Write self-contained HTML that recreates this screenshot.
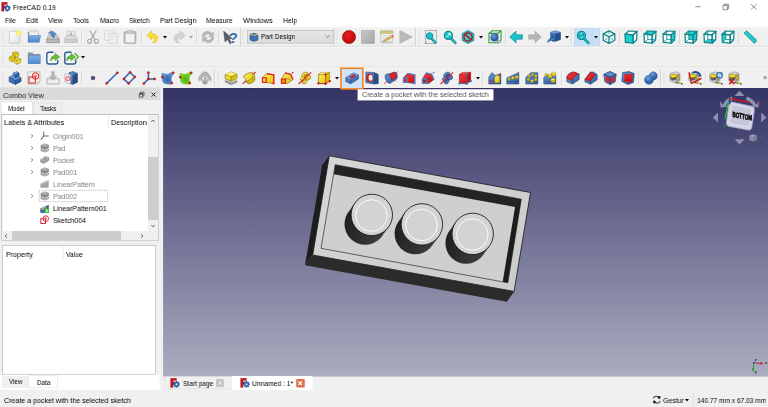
<!DOCTYPE html>
<html lang="en">
<head>
<meta charset="utf-8">
<title>FreeCAD 0.19</title>
<style>
html,body{margin:0;padding:0;}
body{width:768px;height:407px;overflow:hidden;background:#f0f0f0;position:relative;font-family:"Liberation Sans",sans-serif;}
div{position:absolute;box-sizing:border-box;}
.t{position:absolute;white-space:nowrap;display:block;transform-origin:0 50%;will-change:transform;}
.i{position:absolute;overflow:visible;display:block;}
</style>
</head>
<body>
<svg class="i" style="left:0;top:0" width="768" height="407" viewBox="0 0 768 407"><defs>
<linearGradient id="vpg" x1="0" y1="0" x2="0" y2="1"><stop offset="0" stop-color="#333366"/><stop offset="1" stop-color="#acacc0"/></linearGradient>
<linearGradient id="ttl" x1="0" y1="0" x2="0" y2="1"><stop offset="0" stop-color="#dcdcdc"/><stop offset="1" stop-color="#d9d9d9"/></linearGradient>
<linearGradient id="cmb" x1="0" y1="0" x2="0" y2="1"><stop offset="0" stop-color="#e8e8e8"/><stop offset="1" stop-color="#dadada"/></linearGradient>
<linearGradient id="mnu" x1="0" y1="0" x2="0" y2="1"><stop offset="0" stop-color="#ffffff"/><stop offset="1" stop-color="#f0f0f0"/></linearGradient>
</defs><rect x="0" y="0" width="768" height="26" fill="#ffffff" /><rect x="0" y="25.9" width="768" height="2.4" fill="url(#mnu)" /><path d="M0,46.4 H768" stroke="#dddddd" stroke-width="0.9"/><path d="M0,47.4 H768" stroke="#f8f8f8" stroke-width="0.8"/><path d="M0,67 H768" stroke="#dfdfdf" stroke-width="0.9"/><path d="M0,68 H768" stroke="#f8f8f8" stroke-width="0.8"/><rect x="163.1" y="88" width="604.9" height="288.6" fill="url(#vpg)" /><rect x="0" y="87.4" width="160.5" height="12.6" fill="url(#ttl)" /><rect x="1.3" y="101.9" width="31.4" height="12.4" fill="#ffffff" stroke="#dcdcdc" stroke-width="0.6" /><rect x="33.3" y="103.1" width="27.8" height="11.2" fill="#f0f0f0" stroke="#d6d6d6" stroke-width="0.6" /><rect x="1.8" y="114.6" width="156.5" height="125.8" fill="#ffffff" stroke="#b2b2b6" stroke-width="0.8" /><path d="M108.6,115.4 V128.6" stroke="#e3e3e3" stroke-width="0.7"/><rect x="148" y="115" width="10.3" height="116" fill="#f0f0f0" /><rect x="148" y="157" width="10.3" height="62.8" fill="#cdcdcd" /><rect x="2.2" y="231" width="156" height="9.4" fill="#f0f0f0" /><rect x="12" y="231" width="109" height="9.4" fill="#cdcdcd" /><rect x="39.2" y="190.3" width="68.4" height="11.4" fill="none" stroke="#6e6e6e" stroke-width="0.5" stroke-dasharray="0.9 0.9"/><rect x="2.4" y="245.4" width="153" height="128.9" fill="#ffffff" stroke="#bebec4" stroke-width="0.8" /><path d="M63.2,246.4 V259.6" stroke="#e3e3e3" stroke-width="0.7"/><rect x="0" y="374.8" width="159.6" height="14.9" fill="#ffffff" /><rect x="2.45" y="376.65" width="25.5" height="10.7" fill="#f0f0f0" stroke="#e6e6e6" stroke-width="0.5" /><rect x="28.25" y="375.65" width="29.1" height="12.3" fill="#ffffff" stroke="#dedede" stroke-width="0.5" /><rect x="164.9" y="376.7" width="66.4" height="12.2" fill="#f0f0f0" stroke="#dadada" stroke-width="0.6" /><rect x="231.5" y="376" width="81" height="14" fill="#ffffff" /><rect x="216" y="379" width="7.8" height="8" fill="#c4c4c4" rx="1" /><rect x="296.2" y="379" width="8.6" height="8.4" fill="#e0714c" rx="1.2" /><path d="M693.4,392 V407" stroke="#dadada" stroke-width="0.7"/><rect x="247.55" y="30.45" width="85.5" height="12.8" fill="url(#cmb)" stroke="#bcbcbc" stroke-width="0.7" /><rect x="574.25" y="28.25" width="25.5" height="17.2" fill="#c7e0f6" stroke="#b4d5f2" stroke-width="0.5" /><path d="M592.3,28 V45.7" stroke="#aed2f0" stroke-width="0.6"/><rect x="341" y="68.3" width="21.8" height="20.6" fill="#d1e4f6" stroke="#f5831f" stroke-width="1.6" /><rect x="358.2" y="89.9" width="135.8" height="11.2" fill="#1a1a40" opacity="0.25"/><rect x="357.75" y="89.25" width="135.6" height="11.1" fill="#ffffff" stroke="#d0d0da" stroke-width="0.3" /></svg>
<svg class="i" style="left:0px;top:0px;" width="768" height="407" viewBox="0 0 768 407">
<defs>
<linearGradient id="cyl" x1="0" y1="0" x2="1" y2="0.3"><stop offset="0" stop-color="#1c1c1c"/><stop offset="1" stop-color="#3c3c3c"/></linearGradient>
<linearGradient id="topf" x1="0" y1="0" x2="1" y2="1"><stop offset="0" stop-color="#d6d6d6"/><stop offset="1" stop-color="#cbcbcb"/></linearGradient>
</defs>
<polygon points="329.3,155.8 322.1,165.2 305,265.2 312.7,255" fill="#1d1d1d"/>
<polygon points="312.7,255 514.1,291.4 507,301.8 305,265.2" fill="#2b2b2b"/>
<polygon points="329.3,155.8 530.5,192.5 514.1,291.4 312.7,255" fill="url(#topf)" stroke="#151515" stroke-width="0.8"/>
<polygon points="335.2,164.7 521.3,199.2 507.8,282.8 321,248.3" fill="#cfcfcf" stroke="#111" stroke-width="0.6"/>
<polygon points="521.3,199.2 507.8,282.8 502.7,281.8 515.4,205" fill="#1c1c1c"/>
<polygon points="335.2,164.7 521.3,199.2 516.2,207.2 333.8,174.2" fill="#242424"/>
<path d="M354.98,202.83 L348.38,212.03 A20.7,20.7 0 0 1 382.02,236.17 L388.62,226.97 Z" fill="url(#cyl)"/><circle cx="365.2" cy="224.1" r="20.7" fill="url(#cyl)"/><circle cx="371.8" cy="214.9" r="20.7" fill="#d3d3d3" stroke="#141414" stroke-width="0.85"/><circle cx="371.40000000000003" cy="215.5" r="15.8" fill="none" stroke="#ffffff" stroke-width="0.9"/><path d="M405.08,212.33 L398.48,221.53 A20.7,20.7 0 0 1 432.12,245.67 L438.72,236.47 Z" fill="url(#cyl)"/><circle cx="415.29999999999995" cy="233.6" r="20.7" fill="url(#cyl)"/><circle cx="421.9" cy="224.4" r="20.7" fill="#d3d3d3" stroke="#141414" stroke-width="0.85"/><circle cx="421.5" cy="225.0" r="15.8" fill="none" stroke="#ffffff" stroke-width="0.9"/><path d="M455.88,221.83 L449.28,231.03 A20.7,20.7 0 0 1 482.92,255.17 L489.52,245.97 Z" fill="url(#cyl)"/><circle cx="466.09999999999997" cy="243.1" r="20.7" fill="url(#cyl)"/><circle cx="472.7" cy="233.9" r="20.7" fill="#d3d3d3" stroke="#141414" stroke-width="0.85"/><circle cx="472.3" cy="234.5" r="15.8" fill="none" stroke="#ffffff" stroke-width="0.9"/></svg>
<svg class="i" style="left:1.5px;top:29.5px" width="2" height="14.5" viewBox="0 0 2 14.5"><path d="M1,0.6 V14.5" stroke="#c9c9c9" stroke-width="0.9" stroke-dasharray="0.9 1.15" fill="none"/></svg>
<svg class="i" style="left:1.5px;top:50.5px" width="2" height="14" viewBox="0 0 2 14"><path d="M1,0.6 V14" stroke="#c9c9c9" stroke-width="0.9" stroke-dasharray="0.9 1.15" fill="none"/></svg>
<svg class="i" style="left:1.5px;top:71px" width="2" height="15" viewBox="0 0 2 15"><path d="M1,0.6 V15" stroke="#c9c9c9" stroke-width="0.9" stroke-dasharray="0.9 1.15" fill="none"/></svg>
<svg class="i" style="left:8.2px;top:30px;" width="14" height="14" viewBox="0 0 14 14"><defs><linearGradient id="gdoc" x1="0" y1="0" x2="1" y2="1"><stop offset="0" stop-color="#ffffff"/><stop offset="1" stop-color="#e1e1e1"/></linearGradient>
<radialGradient id="gsun"><stop offset="0" stop-color="#fffbd0"/><stop offset="0.6" stop-color="#fcea4f"/><stop offset="1" stop-color="#fcea4f" stop-opacity="0.75"/></radialGradient></defs>
<rect x="1.4" y="1.2" width="10.6" height="12" rx="0.5" fill="url(#gdoc)" stroke="#b4b4b4" stroke-width="0.6"/>
<circle cx="10.6" cy="3.1" r="2.7" fill="url(#gsun)"/></svg>
<svg class="i" style="left:27px;top:30px;" width="14" height="14" viewBox="0 0 14 14"><defs><linearGradient id="gfold" x1="0" y1="0" x2="0" y2="1"><stop offset="0" stop-color="#7fb0e8"/><stop offset="1" stop-color="#4a86cf"/></linearGradient></defs>
<path d="M0.8,2 h4.2 l0.8,1 h6 v8.6 h-11 z" fill="#8f9499"/>
<rect x="2" y="0.9" width="9.2" height="6" fill="#e9e9e9" stroke="#a5a5a5" stroke-width="0.4"/>
<rect x="2.7" y="2" width="8.6" height="5" fill="#f4f4f4" stroke="#b5b5b5" stroke-width="0.4"/>
<path d="M1,12.2 L2.6,5.6 H13.6 L12.2,12.2 Z" fill="url(#gfold)" stroke="#3b6fb4" stroke-width="0.5"/></svg>
<svg class="i" style="left:45.5px;top:30px;" width="14" height="14" viewBox="0 0 14 14"><defs><linearGradient id="gdrv" x1="0" y1="0" x2="0" y2="1"><stop offset="0" stop-color="#d9d9d9"/><stop offset="1" stop-color="#a2a2a2"/></linearGradient></defs>
<path d="M0.6,9 L3,4.6 H11 L13.4,9 V12.8 H0.6 Z" fill="url(#gdrv)" stroke="#8a8a8a" stroke-width="0.5"/>
<rect x="0.9" y="9.2" width="12.2" height="3.4" fill="#b9b9b9" stroke="#909090" stroke-width="0.4"/>
<path d="M2.6,3.6 C3.2,0.6 7.4,0.2 8.4,3.2 L9.8,3 L7.6,8 L4.4,4.2 L5.9,3.9 C5.4,2.6 4,2.6 2.6,3.6 Z" fill="#4d86cd" stroke="#2e5f9f" stroke-width="0.5"/></svg>
<svg class="i" style="left:63.8px;top:30px;" width="14" height="14" viewBox="0 0 14 14"><path d="M3,1.4 H11 V6 H3 Z" fill="#ececec" stroke="#b5b5b5" stroke-width="0.5"/>
<path d="M7,2.2 v2.6 M5.8,3.8 L7,5.2 L8.2,3.8" stroke="#9a9a9a" stroke-width="0.9" fill="none"/>
<path d="M0.8,8.8 L2.6,5.4 H11.4 L13.2,8.8 V12.4 H0.8 Z" fill="#dedede" stroke="#aaaaaa" stroke-width="0.5"/>
<rect x="1" y="9" width="12" height="3.2" fill="#cfcfcf" stroke="#b0b0b0" stroke-width="0.4"/></svg>
<svg class="i" style="left:79.8px;top:30px" width="3" height="14" viewBox="0 0 3 14"><path d="M1.5,0 V14" stroke="#dadada" stroke-width="1" fill="none"/><path d="M2.4,0 V14" stroke="#f8f8f8" stroke-width="0.7" fill="none"/></svg>
<svg class="i" style="left:86.3px;top:30px;" width="14" height="14" viewBox="0 0 14 14"><g fill="none" stroke="#a6a6a6" stroke-width="1.1" stroke-linecap="round">
<path d="M4,0.8 L8.8,9.6"/><path d="M10,0.8 L5.2,9.6"/>
<circle cx="3.6" cy="11.2" r="2"/><circle cx="10.4" cy="11.2" r="2"/></g></svg>
<svg class="i" style="left:104.3px;top:30px;" width="14" height="14" viewBox="0 0 14 14"><rect x="0.8" y="0.8" width="8.4" height="9.6" rx="0.6" fill="#f4f4f4" stroke="#c6c6c6" stroke-width="0.6"/>
<rect x="4.6" y="3.4" width="8.6" height="10" rx="0.6" fill="#f1f1f1" stroke="#c2c2c2" stroke-width="0.6"/>
<path d="M6,6 h5.6 M6,7.8 h5.6 M6,9.6 h4" stroke="#d8d8d8" stroke-width="0.6"/></svg>
<svg class="i" style="left:122.5px;top:30px;" width="14" height="14" viewBox="0 0 14 14"><rect x="1" y="1.6" width="12" height="11.8" rx="1" fill="#b9b9b9" stroke="#a1a1a1" stroke-width="0.6"/>
<rect x="2.6" y="3.4" width="8.8" height="9" fill="#f3f3f3" stroke="#cfcfcf" stroke-width="0.4"/>
<rect x="4.2" y="0.6" width="5.6" height="2.6" rx="0.8" fill="#cfcfcf" stroke="#a1a1a1" stroke-width="0.5"/></svg>
<svg class="i" style="left:139.8px;top:30px" width="3" height="14" viewBox="0 0 3 14"><path d="M1.5,0 V14" stroke="#dadada" stroke-width="1" fill="none"/><path d="M2.4,0 V14" stroke="#f8f8f8" stroke-width="0.7" fill="none"/></svg>
<svg class="i" style="left:145.5px;top:30px;" width="14" height="14" viewBox="0 0 14 14"><path d="M0.8,5.4 L5.6,0.8 V3.6 C10.4,3.6 12.8,6.6 11.6,10 C10.8,12.2 8.6,13 6.6,12.6 C8.6,11.6 9,9.6 8,8.4 C7.4,7.6 6.4,7.4 5.6,7.4 V10 Z" fill="#f8dc3c" stroke="#d9b318" stroke-width="0.5"/></svg>
<svg class="i" style="left:163px;top:35.6px" width="4" height="2.4" viewBox="0 0 4 2.4"><polygon points="0,0 4,0 2,2.4" fill="#000"/></svg>
<svg class="i" style="left:172px;top:30px;" width="14" height="14" viewBox="0 0 14 14"><path d="M13.2,5.4 L8.4,0.8 V3.6 C3.6,3.6 1.2,6.6 2.4,10 C3.2,12.2 5.4,13 7.4,12.6 C5.4,11.6 5,9.6 6,8.4 C6.6,7.6 7.6,7.4 8.4,7.4 V10 Z" fill="#d3d3d3" stroke="#bdbdbd" stroke-width="0.5"/></svg>
<svg class="i" style="left:189.3px;top:35.6px" width="4" height="2.4" viewBox="0 0 4 2.4"><polygon points="0,0 4,0 2,2.4" fill="#9d9d9d"/></svg>
<svg class="i" style="left:194.8px;top:30px" width="3" height="14" viewBox="0 0 3 14"><path d="M1.5,0 V14" stroke="#dadada" stroke-width="1" fill="none"/><path d="M2.4,0 V14" stroke="#f8f8f8" stroke-width="0.7" fill="none"/></svg>
<svg class="i" style="left:201px;top:30px;" width="14" height="14" viewBox="0 0 14 14"><g fill="#b7b7b7" stroke="#a3a3a3" stroke-width="0.3">
<path d="M1,6.6 C1.2,3 4.2,1 7.4,1.4 C9,1.6 10.2,2.4 11,3.4 L12.6,1.8 V6.8 H7.6 L9.2,5.2 C8.4,4.2 7.4,3.8 6.4,3.9 C4.8,4.1 3.9,5.2 3.6,6.6 Z"/>
<path d="M13,7.4 C12.8,11 9.8,13 6.6,12.6 C5,12.4 3.8,11.6 3,10.6 L1.4,12.2 V7.2 H6.4 L4.8,8.8 C5.6,9.8 6.6,10.2 7.6,10.1 C9.2,9.9 10.1,8.8 10.4,7.4 Z"/></g></svg>
<svg class="i" style="left:216.8px;top:30px" width="3" height="14" viewBox="0 0 3 14"><path d="M1.5,0 V14" stroke="#dadada" stroke-width="1" fill="none"/><path d="M2.4,0 V14" stroke="#f8f8f8" stroke-width="0.7" fill="none"/></svg>
<svg class="i" style="left:223px;top:30px;" width="14" height="14" viewBox="0 0 14 14"><text x="10.4" y="12.8" font-family="Liberation Sans,sans-serif" font-weight="bold" font-size="15" text-anchor="middle" fill="#3b70b6">?</text>
<path d="M0.6,1 L9.4,8.6 L6.2,8.8 L8.6,13 L6.8,13.8 L4.6,9.6 L2,12 Z" fill="#595d61" stroke="#3c3f42" stroke-width="0.4"/></svg>
<svg class="i" style="left:238.5px;top:28px" width="3" height="18" viewBox="0 0 3 18"><path d="M1.5,0 V18" stroke="#d2d2d2" stroke-width="1.2" fill="none"/><path d="M2.4,0 V18" stroke="#f8f8f8" stroke-width="0.7" fill="none"/></svg>
<svg class="i" style="left:242.2px;top:29.5px" width="2" height="14.5" viewBox="0 0 2 14.5"><path d="M1,0.6 V14.5" stroke="#c9c9c9" stroke-width="0.9" stroke-dasharray="0.9 1.15" fill="none"/></svg>
<svg class="i" style="left:249.2px;top:31.9px;" width="10" height="10" viewBox="0 0 10 10"><path d="M1,2.2 L5,1.2 L9,2.4 L9,8 L5,9.4 L1,8 Z" fill="#3f6fb6" stroke="#20407a" stroke-width="0.5"/><path d="M1,2.2 L5,3.4 L9,2.4" fill="none" stroke="#e8c93a" stroke-width="0.9"/></svg>
<svg class="i" style="left:325.3px;top:35px" width="5" height="3.2" viewBox="0 0 5 3.2"><path d="M0.4,0.4 L2.5,2.6 L4.6,0.4" fill="none" stroke="#555" stroke-width="0.7"/></svg>
<svg class="i" style="left:333.1px;top:28px" width="3" height="18" viewBox="0 0 3 18"><path d="M1.5,0 V18" stroke="#d2d2d2" stroke-width="1.2" fill="none"/><path d="M2.4,0 V18" stroke="#f8f8f8" stroke-width="0.7" fill="none"/></svg>
<svg class="i" style="left:336.4px;top:29.5px" width="2" height="14.5" viewBox="0 0 2 14.5"><path d="M1,0.6 V14.5" stroke="#c9c9c9" stroke-width="0.9" stroke-dasharray="0.9 1.15" fill="none"/></svg>
<svg class="i" style="left:342.4px;top:30px;" width="14" height="14" viewBox="0 0 14 14"><defs><radialGradient id="grec" cx="0.4" cy="0.35"><stop offset="0" stop-color="#e52222"/><stop offset="1" stop-color="#c50f0f"/></radialGradient></defs><circle cx="7" cy="7" r="6.6" fill="url(#grec)" stroke="#8f0a0a" stroke-width="0.6"/></svg>
<svg class="i" style="left:360.8px;top:30px;" width="14" height="14" viewBox="0 0 14 14"><defs><linearGradient id="gstop" x1="0" y1="0" x2="1" y2="1"><stop offset="0" stop-color="#c9c9c9"/><stop offset="1" stop-color="#a4a4a4"/></linearGradient></defs><rect x="0.4" y="0.4" width="13.2" height="13.2" fill="url(#gstop)" stroke="#9a9a9a" stroke-width="0.4"/></svg>
<svg class="i" style="left:380px;top:30px;" width="14" height="14" viewBox="0 0 14 14"><rect x="0.8" y="1" width="12" height="12" rx="0.8" fill="#f3f3ee" stroke="#a5a5a0" stroke-width="0.6"/>
<rect x="0.8" y="1" width="12" height="2.4" fill="#d9c77a" stroke="#a89a55" stroke-width="0.4"/>
<path d="M2.4,5.6 h8 M2.4,7.4 h8 M2.4,9.2 h6" stroke="#c9c9c4" stroke-width="0.6"/>
<rect x="0.8" y="11" width="12" height="2" fill="#cfcfca"/>
<path d="M3.6,10.4 L11.6,5.6 L12.8,7.2 L4.8,11.6 L3,11.8 Z" fill="#e8b64c" stroke="#8b6a2a" stroke-width="0.4"/>
<path d="M11.6,5.6 L12.8,7.2 L13.8,6.6 L12.8,5 Z" fill="#e05050"/></svg>
<svg class="i" style="left:398.5px;top:30px;" width="14" height="14" viewBox="0 0 14 14"><path d="M0.8,0.6 L13.4,7 L0.8,13.4 Z" fill="#b9b9b9" stroke="#a7a7a7" stroke-width="0.5"/></svg>
<svg class="i" style="left:414.3px;top:28px" width="3" height="18" viewBox="0 0 3 18"><path d="M1.5,0 V18" stroke="#d2d2d2" stroke-width="1.2" fill="none"/><path d="M2.4,0 V18" stroke="#f8f8f8" stroke-width="0.7" fill="none"/></svg>
<svg class="i" style="left:417.8px;top:29.5px" width="2" height="14.5" viewBox="0 0 2 14.5"><path d="M1,0.6 V14.5" stroke="#c9c9c9" stroke-width="0.9" stroke-dasharray="0.9 1.15" fill="none"/></svg>
<svg class="i" style="left:424px;top:30px;" width="14" height="14" viewBox="0 0 14 14"><rect x="1.2" y="0.6" width="11.4" height="12.8" fill="#ececec" stroke="#8f8f8f" stroke-width="0.6"/>
<path d="M1.2,11.4 L3.4,13.4 H1.2 Z" fill="#7a7a7a"/>
<path d="M7.4,8.4 L11.4,12.6" stroke="#0b7e88" stroke-width="2.3" stroke-linecap="round"/>
<path d="M7.4,8.4 L11.4,12.6" stroke="#19c1c9" stroke-width="1.3" stroke-linecap="round"/>
<circle cx="5.6" cy="6" r="3.3" fill="#19c1c9" stroke="#0b7e88" stroke-width="0.8"/></svg>
<svg class="i" style="left:443px;top:30px;" width="14" height="14" viewBox="0 0 14 14"><path d="M7.6,8 L12.4,12.8" stroke="#0b7e88" stroke-width="2.6" stroke-linecap="round"/>
<path d="M7.6,8 L12.4,12.8" stroke="#19c1c9" stroke-width="1.5" stroke-linecap="round"/>
<circle cx="5.4" cy="5.4" r="4.1" fill="#19c1c9" stroke="#0b7e88" stroke-width="1"/><path d="M3.4,7.2 L7.2,3.4 M7.2,3.4 h-2.4 M7.2,3.4 v2.4" stroke="#fff" stroke-width="0.9" fill="none"/></svg>
<svg class="i" style="left:461px;top:30px;" width="14" height="14" viewBox="0 0 14 14"><path d="M7,0.4 L12.8,3.6 V10.4 L7,13.6 L1.2,10.4 V3.6 Z" fill="#19c1c9" stroke="#0b7e88" stroke-width="0.7"/>
<circle cx="7" cy="7" r="4.1" fill="#35c9d0" stroke="#b71c1c" stroke-width="1.5"/>
<path d="M4.2,4.4 L9.8,9.6" stroke="#b71c1c" stroke-width="1.5"/></svg>
<svg class="i" style="left:479px;top:35.6px" width="4" height="2.4" viewBox="0 0 4 2.4"><polygon points="0,0 4,0 2,2.4" fill="#000"/></svg>
<svg class="i" style="left:487.5px;top:30px;" width="14" height="14" viewBox="0 0 14 14"><defs><radialGradient id="gsph" cx="0.4" cy="0.35"><stop offset="0" stop-color="#6f9fdc"/><stop offset="1" stop-color="#2d5aa3"/></radialGradient></defs>
<path d="M1,3.4 L4.2,0.8 H13 V10 L9.8,12.8 H1 Z M1,3.4 H9.8 V12.8 M9.8,3.4 L13,0.8" fill="none" stroke="#2e9a3a" stroke-width="1.1"/>
<circle cx="6.4" cy="7.4" r="4" fill="url(#gsph)"/>
<path d="M9.6,9.6 L13.2,12.4 L11.4,12.6 L10.6,13.8 Z" fill="#e8e8e8" stroke="#777" stroke-width="0.4"/></svg>
<svg class="i" style="left:503.8px;top:30px" width="3" height="14" viewBox="0 0 3 14"><path d="M1.5,0 V14" stroke="#dadada" stroke-width="1" fill="none"/><path d="M2.4,0 V14" stroke="#f8f8f8" stroke-width="0.7" fill="none"/></svg>
<svg class="i" style="left:509px;top:30px;" width="14" height="14" viewBox="0 0 14 14"><path d="M0.6,7 L7,1.2 V4.8 H13.4 V9.2 H7 V12.8 Z" fill="#19c1c9" stroke="#0b7e88" stroke-width="0.6"/></svg>
<svg class="i" style="left:528px;top:30px;" width="14" height="14" viewBox="0 0 14 14"><path d="M13.4,7 L7,1.2 V4.8 H0.6 V9.2 H7 V12.8 Z" fill="#b5b5b5" stroke="#a4a4a4" stroke-width="0.5"/></svg>
<svg class="i" style="left:546.5px;top:30px;" width="14" height="14" viewBox="0 0 14 14"><path d="M3.6,2.2 L8.8,0.8 L13.4,2.4 V9.6 L8,11.6 L3.6,9.8 Z" fill="#3f6fb6" stroke="#1d3b6e" stroke-width="0.5"/>
<path d="M3.6,2.2 L8,3.8 L13.4,2.4 L8.8,0.8 Z" fill="#6f9ad6"/><path d="M8,3.8 V11.6 L13.4,9.6 V2.4 Z" fill="#27508f"/>
<path d="M0.8,12.8 C0.8,9.6 2.6,8 5.4,8 V6.4 L8.4,9 L5.4,11.6 V10 C3.6,10 2.4,10.8 0.8,12.8 Z" fill="#3f86c8" stroke="#173a66" stroke-width="0.5"/></svg>
<svg class="i" style="left:564.5px;top:35.6px" width="4" height="2.4" viewBox="0 0 4 2.4"><polygon points="0,0 4,0 2,2.4" fill="#000"/></svg>
<svg class="i" style="left:569.7px;top:30px" width="3" height="14" viewBox="0 0 3 14"><path d="M1.5,0 V14" stroke="#dadada" stroke-width="1" fill="none"/><path d="M2.4,0 V14" stroke="#f8f8f8" stroke-width="0.7" fill="none"/></svg>
<svg class="i" style="left:576.3px;top:30px;" width="14" height="14" viewBox="0 0 14 14"><path d="M7.6,8 L12.4,12.8" stroke="#0b7e88" stroke-width="2.6" stroke-linecap="round"/>
<path d="M7.6,8 L12.4,12.8" stroke="#19c1c9" stroke-width="1.5" stroke-linecap="round"/>
<circle cx="5.4" cy="5.4" r="4.1" fill="#19c1c9" stroke="#0b7e88" stroke-width="1"/><circle cx="5.4" cy="5.4" r="2.2" fill="none" stroke="#0b7e88" stroke-width="0.8"/><path d="M3.6,4.4 C4.2,3.4 5.4,3 6.4,3.4 M7.2,6.4 C6.6,7.4 5.4,7.8 4.4,7.4" fill="none" stroke="#e6f6f7" stroke-width="0.8"/></svg>
<svg class="i" style="left:594.2px;top:35.6px" width="4" height="2.4" viewBox="0 0 4 2.4"><polygon points="0,0 4,0 2,2.4" fill="#000"/></svg>
<svg class="i" style="left:601.8px;top:30px;" width="14" height="14" viewBox="0 0 14 14"><path d="M7,0.8 L12.8,3.8 V10.2 L7,13.4 L1.2,10.2 V3.8 Z" fill="#f6fbfb"/><path d="M7,0.8 L12.8,3.8 V10.2 L7,13.4 L1.2,10.2 V3.8 Z M1.2,3.8 L7,6.8 L12.8,3.8 M7,6.8 V13.4" fill="none" stroke="#13868c" stroke-width="1.3" stroke-linejoin="round"/><path d="M7,0.8 V4 M3,9.6 L5.4,8.6 M11,9.6 L8.6,8.6" stroke="#13868c" stroke-width="0.7"/></svg>
<svg class="i" style="left:618px;top:30px" width="3" height="14" viewBox="0 0 3 14"><path d="M1.5,0 V14" stroke="#dadada" stroke-width="1" fill="none"/><path d="M2.4,0 V14" stroke="#f8f8f8" stroke-width="0.7" fill="none"/></svg>
<svg class="i" style="left:624.3px;top:30px;" width="14" height="14" viewBox="0 0 14 14"><polygon points="1,4.2 4.6,1 13,1.4 12.6,9.8 9.2,13.2 1.4,12.4" fill="#f6fbfb"/><polygon points="1,4.2 9.2,4.8 9.2,13.2 1.4,12.4" fill="#20cfd4"/><polygon points="1,4.2 9.2,4.8 9.2,13.2 1.4,12.4" fill="none" stroke="#13868c" stroke-width="1.25" stroke-linejoin="round"/><polygon points="1,4.2 4.6,1 13,1.4 9.2,4.8" fill="none" stroke="#13868c" stroke-width="1.25" stroke-linejoin="round"/><polygon points="9.2,4.8 13,1.4 12.6,9.8 9.2,13.2" fill="none" stroke="#13868c" stroke-width="1.25" stroke-linejoin="round"/></svg>
<svg class="i" style="left:643px;top:30px;" width="14" height="14" viewBox="0 0 14 14"><polygon points="1,4.2 4.6,1 13,1.4 12.6,9.8 9.2,13.2 1.4,12.4" fill="#f6fbfb"/><polygon points="1,4.2 4.6,1 13,1.4 9.2,4.8" fill="#20cfd4"/><path d="M4.8,9.4 L1.4,12.4 M4.8,9.4 L4.6,1 M4.8,9.4 L12.6,9.8" fill="none" stroke="#13868c" stroke-width="0.8"/><polygon points="1,4.2 9.2,4.8 9.2,13.2 1.4,12.4" fill="none" stroke="#13868c" stroke-width="1.25" stroke-linejoin="round"/><polygon points="1,4.2 4.6,1 13,1.4 9.2,4.8" fill="none" stroke="#13868c" stroke-width="1.25" stroke-linejoin="round"/><polygon points="9.2,4.8 13,1.4 12.6,9.8 9.2,13.2" fill="none" stroke="#13868c" stroke-width="1.25" stroke-linejoin="round"/></svg>
<svg class="i" style="left:661.7px;top:30px;" width="14" height="14" viewBox="0 0 14 14"><polygon points="1,4.2 4.6,1 13,1.4 12.6,9.8 9.2,13.2 1.4,12.4" fill="#f6fbfb"/><polygon points="9.2,4.8 13,1.4 12.6,9.8 9.2,13.2" fill="#20cfd4"/><path d="M4.8,9.4 L1.4,12.4 M4.8,9.4 L4.6,1 M4.8,9.4 L12.6,9.8" fill="none" stroke="#13868c" stroke-width="0.8"/><polygon points="1,4.2 9.2,4.8 9.2,13.2 1.4,12.4" fill="none" stroke="#13868c" stroke-width="1.25" stroke-linejoin="round"/><polygon points="1,4.2 4.6,1 13,1.4 9.2,4.8" fill="none" stroke="#13868c" stroke-width="1.25" stroke-linejoin="round"/><polygon points="9.2,4.8 13,1.4 12.6,9.8 9.2,13.2" fill="none" stroke="#13868c" stroke-width="1.25" stroke-linejoin="round"/></svg>
<svg class="i" style="left:677.7px;top:30px" width="3" height="14" viewBox="0 0 3 14"><path d="M1.5,0 V14" stroke="#dadada" stroke-width="1" fill="none"/><path d="M2.4,0 V14" stroke="#f8f8f8" stroke-width="0.7" fill="none"/></svg>
<svg class="i" style="left:683.5px;top:30px;" width="14" height="14" viewBox="0 0 14 14"><polygon points="1,4.2 4.6,1 13,1.4 12.6,9.8 9.2,13.2 1.4,12.4" fill="#f6fbfb"/><polygon points="4.6,1 13,1.4 12.6,9.8 4.8,9.4" fill="#20cfd4"/><path d="M4.8,9.4 L1.4,12.4 M4.8,9.4 L4.6,1 M4.8,9.4 L12.6,9.8" fill="none" stroke="#13868c" stroke-width="0.8"/><polygon points="1,4.2 9.2,4.8 9.2,13.2 1.4,12.4" fill="none" stroke="#13868c" stroke-width="1.25" stroke-linejoin="round"/><polygon points="1,4.2 4.6,1 13,1.4 9.2,4.8" fill="none" stroke="#13868c" stroke-width="1.25" stroke-linejoin="round"/><polygon points="9.2,4.8 13,1.4 12.6,9.8 9.2,13.2" fill="none" stroke="#13868c" stroke-width="1.25" stroke-linejoin="round"/></svg>
<svg class="i" style="left:702.5px;top:30px;" width="14" height="14" viewBox="0 0 14 14"><polygon points="1,4.2 4.6,1 13,1.4 12.6,9.8 9.2,13.2 1.4,12.4" fill="#f6fbfb"/><polygon points="1.4,12.4 9.2,13.2 12.6,9.8 4.8,9.4" fill="#20cfd4"/><path d="M4.8,9.4 L1.4,12.4 M4.8,9.4 L4.6,1 M4.8,9.4 L12.6,9.8" fill="none" stroke="#13868c" stroke-width="0.8"/><polygon points="1,4.2 9.2,4.8 9.2,13.2 1.4,12.4" fill="none" stroke="#13868c" stroke-width="1.25" stroke-linejoin="round"/><polygon points="1,4.2 4.6,1 13,1.4 9.2,4.8" fill="none" stroke="#13868c" stroke-width="1.25" stroke-linejoin="round"/><polygon points="9.2,4.8 13,1.4 12.6,9.8 9.2,13.2" fill="none" stroke="#13868c" stroke-width="1.25" stroke-linejoin="round"/></svg>
<svg class="i" style="left:721px;top:30px;" width="14" height="14" viewBox="0 0 14 14"><polygon points="1,4.2 4.6,1 13,1.4 12.6,9.8 9.2,13.2 1.4,12.4" fill="#f6fbfb"/><polygon points="1,4.2 4.6,1 4.8,9.4 1.4,12.4" fill="#20cfd4"/><path d="M4.8,9.4 L1.4,12.4 M4.8,9.4 L4.6,1 M4.8,9.4 L12.6,9.8" fill="none" stroke="#13868c" stroke-width="0.8"/><polygon points="1,4.2 9.2,4.8 9.2,13.2 1.4,12.4" fill="none" stroke="#13868c" stroke-width="1.25" stroke-linejoin="round"/><polygon points="1,4.2 4.6,1 13,1.4 9.2,4.8" fill="none" stroke="#13868c" stroke-width="1.25" stroke-linejoin="round"/><polygon points="9.2,4.8 13,1.4 12.6,9.8 9.2,13.2" fill="none" stroke="#13868c" stroke-width="1.25" stroke-linejoin="round"/></svg>
<svg class="i" style="left:737.2px;top:30px" width="3" height="14" viewBox="0 0 3 14"><path d="M1.5,0 V14" stroke="#dadada" stroke-width="1" fill="none"/><path d="M2.4,0 V14" stroke="#f8f8f8" stroke-width="0.7" fill="none"/></svg>
<svg class="i" style="left:742.5px;top:30px;" width="14" height="14" viewBox="0 0 14 14"><path d="M1,3.2 L3.6,0.8 L13,9.4 C13.6,11.2 12.8,12.8 11,13.2 L9.6,11.6 Z" fill="#20cfd4" stroke="#13868c" stroke-width="0.8" stroke-linejoin="round"/>
<path d="M4.4,4.6 l1,-1 M6.2,6.4 l1,-1 M8,8.2 l1,-1 M9.8,10 l1,-1" stroke="#13868c" stroke-width="0.5"/></svg>
<svg class="i" style="left:8px;top:50.5px;" width="14" height="14" viewBox="0 0 14 14"><g stroke="#8a7400" stroke-width="0.5" stroke-linejoin="round">
<path d="M4.4,1.8 L8,0.6 L10.6,2 L10.6,5 L7,6.6 L4.4,5 Z" fill="#f2d628"/>
<path d="M1.4,6 L5,4.6 L7.6,6 L7.6,9.4 L4,11 L1.4,9.4 Z" fill="#f2d628"/>
<path d="M6.4,8 L10,6.6 L12.8,8 L12.8,11.6 L9,13.4 L6.4,11.6 Z" fill="#f4dc3a"/>
<path d="M4.4,1.8 L7,3.2 L10.6,2 M7,3.2 V6.6 M1.4,6 L4,7.4 L7.6,6 M4,7.4 V11 M6.4,8 L9,9.6 L12.8,8 M9,9.6 V13.4" fill="none"/></g></svg>
<svg class="i" style="left:26.5px;top:50.5px;" width="14" height="14" viewBox="0 0 14 14"><path d="M0.8,1.6 h4.6 l1,1.4 h6.8 v9.6 h-12.4 z" fill="#8e9398"/>
<rect x="1.6" y="4.4" width="11.6" height="8.4" fill="url(#gfold)" stroke="#4a7fc6" stroke-width="0.4"/></svg>
<svg class="i" style="left:45.5px;top:50.5px;" width="14" height="14" viewBox="0 0 14 14"><path d="M7,1.2 H3 C1.6,1.2 0.8,2 0.8,3.4 V10.8 C0.8,12.2 1.6,13 3,13 H9.6 C11,13 11.8,12.2 11.8,10.8 V9.4" fill="#f4f4f4" stroke="#2c5b94" stroke-width="1.4" stroke-linecap="round"/><path d="M4.6,10 C4.6,6.4 6.4,4.6 9,4.6 V2.4 L13.6,6 L9,9.6 V7.4 C7.2,7.4 5.8,8 4.6,10 Z" fill="#66c23a" stroke="#2f7d19" stroke-width="0.5"/></svg>
<svg class="i" style="left:64px;top:50.5px;" width="14" height="14" viewBox="0 0 14 14"><path d="M7,1.2 H3 C1.6,1.2 0.8,2 0.8,3.4 V10.8 C0.8,12.2 1.6,13 3,13 H9.6 C11,13 11.8,12.2 11.8,10.8 V9.4" fill="#f4f4f4" stroke="#2c5b94" stroke-width="1.4" stroke-linecap="round"/><path d="M10.6,2 L14.4,5.8 L10.6,9.6" fill="none" stroke="#4fae2c" stroke-width="1.3"/><g transform="translate(-2,0)"><path d="M4.6,10 C4.6,6.4 6.4,4.6 9,4.6 V2.4 L13.6,6 L9,9.6 V7.4 C7.2,7.4 5.8,8 4.6,10 Z" fill="#66c23a" stroke="#2f7d19" stroke-width="0.5"/></g></svg>
<svg class="i" style="left:81.4px;top:56.4px" width="4" height="2.4" viewBox="0 0 4 2.4"><polygon points="0,0 4,0 2,2.4" fill="#000"/></svg>
<svg class="i" style="left:0;top:0" width="0" height="0"><defs><linearGradient id="gbl" x1="0" y1="0" x2="1" y2="1"><stop offset="0" stop-color="#6a9ad6"/><stop offset="1" stop-color="#2c5aa0"/></linearGradient><linearGradient id="gyl" x1="0" y1="0" x2="1" y2="1"><stop offset="0" stop-color="#fcee60"/><stop offset="1" stop-color="#e0c20a"/></linearGradient><linearGradient id="grd" x1="0" y1="0" x2="1" y2="1"><stop offset="0" stop-color="#f43a3a"/><stop offset="1" stop-color="#c80f0f"/></linearGradient><linearGradient id="ggn" x1="0" y1="0" x2="1" y2="1"><stop offset="0" stop-color="#8be234"/><stop offset="1" stop-color="#4fb514"/></linearGradient><radialGradient id="gblr" cx="0.5" cy="0.6" r="0.6"><stop offset="0" stop-color="#2f62ab"/><stop offset="1" stop-color="#6c9cd8"/></radialGradient><radialGradient id="ggnr" cx="0.5" cy="0.6" r="0.6"><stop offset="0" stop-color="#4db312"/><stop offset="1" stop-color="#86e030"/></radialGradient><linearGradient id="ggy" x1="0" y1="0" x2="1" y2="1"><stop offset="0" stop-color="#dcdcdc"/><stop offset="1" stop-color="#9a9a9a"/></linearGradient></defs></svg>
<svg class="i" style="left:8.3px;top:70.8px;" width="14" height="14" viewBox="0 0 14 14"><path d="M1.2,6.2 L5.2,4.4 V2.2 L8.6,0.8 L11,2 V5.8 L13,6.8 V10.4 L7.4,13.4 L1.2,10.6 Z" fill="#2f62ab" stroke="#173462" stroke-width="0.7" stroke-linejoin="round"/>
<path d="M5.2,2.2 L8.6,0.8 L11,2 L7.6,3.4 Z" fill="#7aa6de"/>
<path d="M1.2,6.2 L5.2,4.4 L7.6,5.6 V7.4 L11,5.8 L13,6.8 L7.4,9.4 Z" fill="#6c9bd8"/>
<path d="M5.2,2.2 L7.6,3.4 V7.4 L5.2,6 Z" fill="#4377bf"/>
<path d="M1.2,6.2 L7.4,9.4 V13.4 L1.2,10.6 Z" fill="#3e72ba"/>
<path d="M7.6,3.4 L11,2 M7.6,3.4 V7.4 M1.2,6.2 L7.4,9.4 L13,6.8 M7.4,9.4 V13.4" fill="none" stroke="#173462" stroke-width="0.5"/></svg>
<svg class="i" style="left:26.7px;top:70.8px;" width="14" height="14" viewBox="0 0 14 14"><path d="M0.8,0.8 H13 V10.6 L10.4,13.2 H0.8 Z" fill="#f1f1f1" stroke="#9c9c9c" stroke-width="0.6"/>
<path d="M13,10.6 H10.4 V13.2 Z" fill="#bdbdbd"/>
<rect x="2" y="6" width="6.4" height="6" fill="none" stroke="#e81e1e" stroke-width="1"/>
<circle cx="8.6" cy="5" r="3.3" fill="none" stroke="#e81e1e" stroke-width="1"/>
<circle cx="8.6" cy="5" r="1.1" fill="none" stroke="#e81e1e" stroke-width="0.6"/></svg>
<svg class="i" style="left:45.5px;top:70.8px;" width="14" height="14" viewBox="0 0 14 14"><path d="M1,7.6 H13 V12.8 H1 Z" fill="none" stroke="#b9b9b9" stroke-width="1.2"/>
<path d="M5.6,0.6 H8.4 V5.4 H10.8 L7,9.4 L3.2,5.4 H5.6 Z" fill="#b3b3b3" stroke="#a2a2a2" stroke-width="0.4"/></svg>
<svg class="i" style="left:64px;top:70.8px;" width="14" height="14" viewBox="0 0 14 14"><path d="M5,1.6 L9,0.6 L13.4,2.4 V11.2 L8.6,13.4 L5,12 Z" fill="url(#gbl)" stroke="#173462" stroke-width="0.5"/>
<path d="M8.6,4 L13.4,2.4 V11.2 L8.6,13.4 Z" fill="#173462" opacity="0.6"/>
<path d="M0.8,2.6 L6.4,4 V13 L0.8,11 Z" fill="#f3f3f3" stroke="#9c9c9c" stroke-width="0.5"/>
<circle cx="3.8" cy="7.6" r="2.1" fill="none" stroke="#e81e1e" stroke-width="0.8"/><path d="M3,8.2 L4.6,7" stroke="#e81e1e" stroke-width="0.6"/></svg>
<svg class="i" style="left:79.8px;top:71px" width="3" height="14" viewBox="0 0 3 14"><path d="M1.5,0 V14" stroke="#dadada" stroke-width="1" fill="none"/><path d="M2.4,0 V14" stroke="#f8f8f8" stroke-width="0.7" fill="none"/></svg>
<svg class="i" style="left:86.2px;top:71px;" width="14" height="14" viewBox="0 0 14 14"><circle cx="7" cy="7" r="2.3" fill="#3568ad"/><circle cx="7" cy="7" r="1.1" fill="#e01818"/></svg>
<svg class="i" style="left:104.7px;top:70.8px;" width="14" height="14" viewBox="0 0 14 14"><path d="M1.6,12.4 L12.4,1.8" stroke="#3568ad" stroke-width="1.5"/><circle cx="1.6" cy="12.4" r="1.15" fill="#e01818" stroke="#9c0d0d" stroke-width="0.3"/><circle cx="12.4" cy="1.8" r="1.15" fill="#e01818" stroke="#9c0d0d" stroke-width="0.3"/></svg>
<svg class="i" style="left:123.3px;top:70.8px;" width="14" height="14" viewBox="0 0 14 14"><path d="M7,1.2 L11.8,6 L5.6,12.4 L0.8,8 Z" fill="none" stroke="#3568ad" stroke-width="1.5"/><circle cx="7.2" cy="1.4" r="1.15" fill="#e01818" stroke="#9c0d0d" stroke-width="0.3"/><circle cx="11.8" cy="6" r="1.15" fill="#e01818" stroke="#9c0d0d" stroke-width="0.3"/><circle cx="5.6" cy="12.4" r="1.15" fill="#e01818" stroke="#9c0d0d" stroke-width="0.3"/><circle cx="0.9" cy="8" r="1.15" fill="#e01818" stroke="#9c0d0d" stroke-width="0.3"/></svg>
<svg class="i" style="left:142px;top:70.8px;" width="14" height="14" viewBox="0 0 14 14"><path d="M6.4,1.6 V8 H12.6 M6.4,8 L1.8,12.6" fill="none" stroke="#3568ad" stroke-width="1.5"/><circle cx="6.4" cy="1.6" r="1.15" fill="#e01818" stroke="#9c0d0d" stroke-width="0.3"/><circle cx="12.6" cy="8" r="1.15" fill="#e01818" stroke="#9c0d0d" stroke-width="0.3"/><circle cx="1.8" cy="12.6" r="1.15" fill="#e01818" stroke="#9c0d0d" stroke-width="0.3"/><circle cx="6.4" cy="8" r="1.15" fill="#e01818" stroke="#9c0d0d" stroke-width="0.3"/></svg>
<svg class="i" style="left:160.8px;top:70.8px;" width="14" height="14" viewBox="0 0 14 14"><path d="M0.9,2.4 C2.4,1.6 4.4,3.6 6.4,3.2 C8.6,2.8 10.4,0.4 12.8,1 C13.4,2.6 10.4,5.2 10.2,7.4 C10,9.4 12,11.4 11.2,12.6 C9.4,13.6 6,13.2 3.6,12.4 C1.4,11.6 1.6,9.6 1.2,7.4 C1,5.8 0.4,3.6 0.9,2.4 Z" fill="url(#gblr)" stroke="#4a7cc0" stroke-width="0.4"/><circle cx="12.2" cy="1.8" r="1.15" fill="#e01818" stroke="#9c0d0d" stroke-width="0.3"/><circle cx="1.4" cy="6.2" r="1.15" fill="#e01818" stroke="#9c0d0d" stroke-width="0.3"/><circle cx="10.6" cy="12.2" r="1.15" fill="#e01818" stroke="#9c0d0d" stroke-width="0.3"/></svg>
<svg class="i" style="left:179.2px;top:70.8px;" width="14" height="14" viewBox="0 0 14 14"><path d="M0.9,2.4 C2.4,1.6 4.4,3.6 6.4,3.2 C8.6,2.8 10.4,0.4 12.8,1 C13.4,2.6 10.4,5.2 10.2,7.4 C10,9.4 12,11.4 11.2,12.6 C9.4,13.6 6,13.2 3.6,12.4 C1.4,11.6 1.6,9.6 1.2,7.4 C1,5.8 0.4,3.6 0.9,2.4 Z" fill="url(#ggnr)" stroke="#5fbf20" stroke-width="0.4"/><circle cx="12.2" cy="1.8" r="1.15" fill="#e01818" stroke="#9c0d0d" stroke-width="0.3"/><circle cx="1.4" cy="6.2" r="1.15" fill="#e01818" stroke="#9c0d0d" stroke-width="0.3"/><circle cx="10.6" cy="12.2" r="1.15" fill="#e01818" stroke="#9c0d0d" stroke-width="0.3"/></svg>
<svg class="i" style="left:198px;top:71px;" width="14" height="14" viewBox="0 0 14 14"><path d="M7,0.8 C9,0.8 10.6,2 11.2,3.8 C12.6,5 13.6,7.2 13.4,9.2 C13,10.2 12,10 11.4,9 L10.6,7.6 C10.6,10.4 9.2,13.6 7,13.6 C4.8,13.6 3.4,10.4 3.4,7.6 L2.6,9 C2,10 1,10.2 0.6,9.2 C0.4,7.2 1.4,5 2.8,3.8 C3.4,2 5,0.8 7,0.8 Z" fill="#b4b4b4" stroke="#a2a2a2" stroke-width="0.4"/>
<ellipse cx="7" cy="7.2" rx="2.7" ry="1.7" fill="#f1f1f1"/><ellipse cx="7.2" cy="7.4" rx="1.1" ry="1.2" fill="#8a8a8a"/>
<ellipse cx="7" cy="11.8" rx="1.9" ry="1.3" fill="#9a9a9a"/></svg>
<svg class="i" style="left:213.2px;top:69px" width="3" height="18" viewBox="0 0 3 18"><path d="M1.5,0 V18" stroke="#d2d2d2" stroke-width="1.2" fill="none"/><path d="M2.4,0 V18" stroke="#f8f8f8" stroke-width="0.7" fill="none"/></svg>
<svg class="i" style="left:217px;top:71px" width="2" height="14.5" viewBox="0 0 2 14.5"><path d="M1,0.6 V14.5" stroke="#c9c9c9" stroke-width="0.9" stroke-dasharray="0.9 1.15" fill="none"/></svg>
<svg class="i" style="left:223.5px;top:70.8px;" width="14" height="14" viewBox="0 0 14 14"><path d="M1.4,9.6 L7,12.2 L12.8,9.8 M1.4,9.6 V11 L7,13.6 L12.8,11.2 V9.8" fill="#d9d9d9" stroke="#5e5e5e" stroke-width="0.7" stroke-linejoin="round"/>
<path d="M1.2,3.6 L7.2,1 L13,3.2 V7.6 L7,10.2 L1.2,7.8 Z" fill="url(#gyl)" stroke="#6e5e00" stroke-width="0.6" stroke-linejoin="round"/>
<path d="M1.2,3.6 L7.2,1 L13,3.2 L7,5.8 Z" fill="#fdf27a"/><path d="M7,5.8 L13,3.2 V7.6 L7,10.2 Z" fill="#d8bc0c"/>
<path d="M1.2,3.6 L7,5.8 L13,3.2 M7,5.8 V10.2" fill="none" stroke="#6e5e00" stroke-width="0.5"/></svg>
<svg class="i" style="left:242px;top:70.8px;" width="14" height="14" viewBox="0 0 14 14"><path d="M0.6,12.8 L4,9.6 M10.8,3.6 L13.6,1" stroke="#e81e1e" stroke-width="1.1"/>
<path d="M1,5.4 C3.6,2.6 7.6,1.2 10.6,1.8 C12.8,3.4 13.2,6.8 12.6,9.6 C11.2,11.2 9.4,12.2 6.4,12.6 L3.6,10.6 C4.2,8.6 3.2,6.6 1,5.4 Z" fill="url(#gyl)" stroke="#6e5e00" stroke-width="0.6"/>
<path d="M3.6,10.6 C7,10 9.6,8.4 10.8,6 C11.2,4.6 11,3 10.6,1.8" fill="none" stroke="#6e5e00" stroke-width="0.5"/>
<path d="M3.6,10.6 C7,10 9.6,8.4 10.8,6 L12.6,9.6 C11.2,11.2 9.4,12.2 6.4,12.6 Z" fill="#d8bc0c" stroke="#6e5e00" stroke-width="0.4"/></svg>
<svg class="i" style="left:261px;top:70.8px;" width="14" height="14" viewBox="0 0 14 14"><path d="M1.4,6.6 L5.6,2.6 L12.8,3.8 V12.6 L5.6,11.6 L1.4,11.4 Z" fill="url(#gyl)" stroke="#6e5e00" stroke-width="0.5"/>
<path d="M5.6,2.6 L12.8,3.8 V12.6 L10.6,12.2" fill="none" stroke="#e81e1e" stroke-width="1.3"/>
<rect x="1.5" y="6.8" width="3.8" height="4.6" fill="none" stroke="#e81e1e" stroke-width="1.2"/></svg>
<svg class="i" style="left:279.5px;top:70.8px;" width="14" height="14" viewBox="0 0 14 14"><path d="M1.4,8 L5,2 L10.6,3.2 L13,8.4 L7.6,12.6 L1.4,12.2 Z" fill="url(#gyl)" stroke="#6e5e00" stroke-width="0.5"/>
<path d="M5,2 L10.6,3.2 L13,8.4" fill="none" stroke="#e81e1e" stroke-width="1.3"/>
<path d="M5.4,8.2 C7.4,7.4 9.4,7.8 10.6,9.4" fill="none" stroke="#6e5e00" stroke-width="0.5"/>
<rect x="1.5" y="8" width="4" height="4.2" fill="#6e5e00" fill-opacity="0.35" stroke="#e81e1e" stroke-width="1.2"/>
<circle cx="12.6" cy="1.6" r="0.9" fill="#e81e1e"/></svg>
<svg class="i" style="left:298px;top:70.8px;" width="14" height="14" viewBox="0 0 14 14"><path d="M4.2,6.4 C2.8,4.4 4.6,1.6 7.4,1.2 C9.6,0.8 10.6,2.4 9.8,3.8 C12,3.6 13.2,5.6 12.2,7.4 C11.4,8.8 9.8,9.2 8.8,8.6 C9.2,10.8 8.2,12.8 6.2,13 C4.6,13 3.8,11.6 4.6,10.2 C2.8,10.2 1.8,8.6 2.6,7.4 C3,6.8 3.6,6.4 4.2,6.4 Z" fill="url(#gyl)" stroke="#6e5e00" stroke-width="0.6"/>
<path d="M5.6,5.4 C6.2,3.8 8,3.2 9.8,3.8 M8.8,8.6 C7.6,8 7,6.8 7.4,5.6 M4.6,10.2 C5.6,10.2 6.6,9.6 7,8.6" fill="none" stroke="#6e5e00" stroke-width="0.7"/>
<path d="M5.6,5.4 C6.2,3.8 8,3.2 9.8,3.8 C8.8,5 8,5.4 7.4,5.6 C7,6.8 7.6,8 8.8,8.6 C8,9.4 7.4,9 7,8.6 C6.6,7.6 5.8,6.4 5.6,5.4 Z" fill="#8a7400" opacity="0.55"/>
<path d="M0.6,13 L13.2,1.4" stroke="#e81e1e" stroke-width="1.1"/></svg>
<svg class="i" style="left:316.5px;top:70.8px;" width="14" height="14" viewBox="0 0 14 14"><path d="M1.4,3.4 L4.6,1.4 H12.6 V10 L8.6,12.4 H1.4 Z" fill="url(#gyl)" stroke="#6e5e00" stroke-width="0.6" stroke-linejoin="round"/>
<path d="M1.4,3.4 L4.6,1.4 H12.6 L8.6,3.4 Z" fill="#fdf27a"/><path d="M8.6,3.4 L12.6,1.4 V10 L8.6,12.4 Z" fill="#d9bd0a"/>
<path d="M1.4,3.4 H8.6 L12.6,1.4" fill="none" stroke="#6e5e00" stroke-width="0.5"/>
<path d="M8.6,3.2 V12.8 M1.2,12.4 L8.6,12.8 L12.8,10.2" stroke="#c81414" stroke-width="0.7" fill="none"/><circle cx="8.6" cy="3.4" r="1.15" fill="#c81414"/><circle cx="1.4" cy="12.4" r="1.15" fill="#c81414"/><circle cx="8.6" cy="12.9" r="1.15" fill="#c81414"/><circle cx="12.8" cy="10.2" r="1.15" fill="#c81414"/></svg>
<svg class="i" style="left:334.8px;top:76.6px" width="4" height="2.4" viewBox="0 0 4 2.4"><polygon points="0,0 4,0 2,2.4" fill="#000"/></svg>
<svg class="i" style="left:345px;top:70.8px;" width="14" height="14" viewBox="0 0 14 14"><path d="M0.8,6.6 L8.6,1.8 L13.4,4 V8 L5.6,12.8 L0.8,10.6 Z" fill="url(#gbl)" stroke="#173462" stroke-width="0.5" stroke-linejoin="round"/>
<path d="M0.8,6.6 L5.6,8.8 L13.4,4 M5.6,8.8 V12.8" fill="none" stroke="#173462" stroke-width="0.5"/>
<path d="M0.8,6.6 L8.6,1.8 L13.4,4 L5.6,8.8 Z" fill="#6b9bd6"/>
<path d="M4.6,6.2 L8.4,3.8 L10.6,4.8 L6.8,7.2 Z" fill="#e81e1e" stroke="#8c0b0b" stroke-width="0.4"/></svg>
<svg class="i" style="left:365px;top:70.8px;" width="14" height="14" viewBox="0 0 14 14"><path d="M0.8,1 L9,1.6 L13.2,3.4 V12.6 L9,13 L0.8,11.6 Z" fill="url(#gbl)" stroke="#173462" stroke-width="0.5"/>
<path d="M9,1.6 V13" stroke="#173462" stroke-width="0.5"/><path d="M9,1.6 L13.2,3.4 V12.6 L9,13 Z" fill="#173462" opacity="0.5"/>
<ellipse cx="4.8" cy="6.8" rx="3.2" ry="4" fill="#e81e1e" stroke="#8c0b0b" stroke-width="0.4"/><ellipse cx="5.6" cy="6.8" rx="2" ry="3" fill="#f3e9e9"/></svg>
<svg class="i" style="left:383.5px;top:70.8px;" width="14" height="14" viewBox="0 0 14 14"><path d="M0.4,12.8 L5,8" stroke="#e81e1e" stroke-width="1"/>
<path d="M1,5.4 C1,3.4 3,2.4 5,3 L10,1 C12,1 13.6,3 13.4,5.6 C13.2,8 11.6,9.8 9.6,10 L6,12.4 C3.6,12.4 1.2,9 1,5.4 Z" fill="url(#gbl)" stroke="#173462" stroke-width="0.5"/>
<path d="M5,3.4 L10.4,1.4 C12,2.4 12.6,4.6 12,6.6 L7.4,9.2 C7.6,7 6.8,4.6 5,3.4 Z" fill="#e81e1e" stroke="#8c0b0b" stroke-width="0.4"/>
<path d="M9.4,4.8 L13.6,0.8" stroke="#e81e1e" stroke-width="1"/></svg>
<svg class="i" style="left:402.3px;top:70.8px;" width="14" height="14" viewBox="0 0 14 14"><path d="M1.4,6.6 L5.6,2.6 L12.8,3.8 V12.6 L5.6,11.6 L1.4,11.4 Z" fill="url(#grd)" stroke="#173462" stroke-width="0.5"/>
<path d="M5.6,2.6 L12.8,3.8 V12.6 L10.6,12.2" fill="none" stroke="#4f82c6" stroke-width="1.3"/>
<rect x="1.5" y="6.8" width="3.8" height="4.6" fill="none" stroke="#4f82c6" stroke-width="1.2"/></svg>
<svg class="i" style="left:420.7px;top:70.8px;" width="14" height="14" viewBox="0 0 14 14"><path d="M1.4,8 L5,2 L10.6,3.2 L13,8.4 L7.6,12.6 L1.4,12.2 Z" fill="url(#grd)" stroke="#173462" stroke-width="0.5"/>
<path d="M5,2 L10.6,3.2 L13,8.4" fill="none" stroke="#4f82c6" stroke-width="1.3"/>
<path d="M5.4,8.2 C7.4,7.4 9.4,7.8 10.6,9.4" fill="none" stroke="#173462" stroke-width="0.5"/>
<rect x="1.5" y="8" width="4" height="4.2" fill="#173462" fill-opacity="0.35" stroke="#4f82c6" stroke-width="1.2"/>
<circle cx="12.6" cy="1.6" r="0.9" fill="#4f82c6"/></svg>
<svg class="i" style="left:439.5px;top:70.8px;" width="14" height="14" viewBox="0 0 14 14"><path d="M4.2,6.4 C2.8,4.4 4.6,1.6 7.4,1.2 C9.6,0.8 10.6,2.4 9.8,3.8 C12,3.6 13.2,5.6 12.2,7.4 C11.4,8.8 9.8,9.2 8.8,8.6 C9.2,10.8 8.2,12.8 6.2,13 C4.6,13 3.8,11.6 4.6,10.2 C2.8,10.2 1.8,8.6 2.6,7.4 C3,6.8 3.6,6.4 4.2,6.4 Z" fill="url(#gbl)" stroke="#173462" stroke-width="0.6"/>
<path d="M5.6,5.4 C6.2,3.8 8,3.2 9.8,3.8 M8.8,8.6 C7.6,8 7,6.8 7.4,5.6 M4.6,10.2 C5.6,10.2 6.6,9.6 7,8.6" fill="none" stroke="#173462" stroke-width="0.7"/>
<path d="M5.6,5.4 C6.2,3.8 8,3.2 9.8,3.8 C8.8,5 8,5.4 7.4,5.6 C7,6.8 7.6,8 8.8,8.6 C8,9.4 7.4,9 7,8.6 C6.6,7.6 5.8,6.4 5.6,5.4 Z" fill="#16325e" opacity="0.55"/>
<path d="M0.6,13 L13.2,1.4" stroke="#e81e1e" stroke-width="1.1"/></svg>
<svg class="i" style="left:457.5px;top:70.8px;" width="14" height="14" viewBox="0 0 14 14"><path d="M1.4,3.4 L4.6,1.4 H12.6 V10 L8.6,12.4 H1.4 Z" fill="url(#grd)" stroke="#8c0b0b" stroke-width="0.6" stroke-linejoin="round"/>
<path d="M1.4,3.4 L4.6,1.4 H12.6 L8.6,3.4 Z" fill="#f65a5a"/><path d="M8.6,3.4 L12.6,1.4 V10 L8.6,12.4 Z" fill="#c21010"/>
<path d="M1.4,3.4 H8.6 L12.6,1.4" fill="none" stroke="#8c0b0b" stroke-width="0.5"/>
<path d="M8.6,3.2 V12.8 M1.2,12.4 L8.6,12.8 L12.8,10.2" stroke="#3f72b8" stroke-width="0.7" fill="none"/><circle cx="8.6" cy="3.4" r="1.15" fill="#3f72b8"/><circle cx="1.4" cy="12.4" r="1.15" fill="#3f72b8"/><circle cx="8.6" cy="12.9" r="1.15" fill="#3f72b8"/><circle cx="12.8" cy="10.2" r="1.15" fill="#3f72b8"/></svg>
<svg class="i" style="left:475.7px;top:76.6px" width="4" height="2.4" viewBox="0 0 4 2.4"><polygon points="0,0 4,0 2,2.4" fill="#000"/></svg>
<svg class="i" style="left:481.2px;top:71px" width="3" height="14" viewBox="0 0 3 14"><path d="M1.5,0 V14" stroke="#dadada" stroke-width="1" fill="none"/><path d="M2.4,0 V14" stroke="#f8f8f8" stroke-width="0.7" fill="none"/></svg>
<svg class="i" style="left:487.5px;top:70.8px;" width="14" height="14" viewBox="0 0 14 14"><path d="M0.8,6 L4,1.6 L7,4.4 L12.8,2.6 V13 H0.8 Z" fill="url(#gbl)" stroke="#173462" stroke-width="0.5" stroke-linejoin="round"/><path d="M0.8,9.6 L6,11 L12.8,9.4" fill="none" stroke="#173462" stroke-width="0.4"/><path d="M1.6,12.4 L5.4,9.4 M11.4,3.8 L13,2.6" stroke="#e81e1e" stroke-width="1"/><path d="M6.6,6.6 C6.6,4.2 11.8,4.2 11.8,6.6 V10.4 C11.8,12.4 6.6,12.4 6.6,10.4 Z" fill="url(#gyl)" stroke="#6e5e00" stroke-width="0.4"/><path d="M7.6,5.4 L9.2,3.4 L10.8,5.4" fill="#f4dc3a" stroke="#6e5e00" stroke-width="0.3"/></svg>
<svg class="i" style="left:506px;top:70.8px;" width="14" height="14" viewBox="0 0 14 14"><path d="M0.8,7 L12.8,1.4 V13 H0.8 Z" fill="url(#gbl)" stroke="#173462" stroke-width="0.5" stroke-linejoin="round"/><path d="M0.8,9.8 L6,11 L12.8,9.4" fill="none" stroke="#173462" stroke-width="0.4"/><path d="M1.7,7.6 v1.1700000000000002 a1.3,0.65 0 0 0 2.6,0 v-1.1700000000000002 Z" fill="#e6c814" stroke="#6e5e00" stroke-width="0.3"/><ellipse cx="3" cy="7.6" rx="1.3" ry="0.7150000000000001" fill="#fbea55" stroke="#6e5e00" stroke-width="0.3"/><path d="M5.3,6.4 v1.35 a1.5,0.75 0 0 0 3.0,0 v-1.35 Z" fill="#e6c814" stroke="#6e5e00" stroke-width="0.3"/><ellipse cx="6.8" cy="6.4" rx="1.5" ry="0.8250000000000001" fill="#fbea55" stroke="#6e5e00" stroke-width="0.3"/><path d="M9.200000000000001,5.6 v1.4400000000000002 a1.6,0.8 0 0 0 3.2,0 v-1.4400000000000002 Z" fill="#e6c814" stroke="#6e5e00" stroke-width="0.3"/><ellipse cx="10.8" cy="5.6" rx="1.6" ry="0.8800000000000001" fill="#fbea55" stroke="#6e5e00" stroke-width="0.3"/></svg>
<svg class="i" style="left:525px;top:70.8px;" width="14" height="14" viewBox="0 0 14 14"><path d="M0.8,6.4 L6,1.6 L12.8,1.8 V13 H0.8 Z" fill="url(#gbl)" stroke="#173462" stroke-width="0.5" stroke-linejoin="round"/><path d="M0.8,10 L6,11.2 L12.8,9.6" fill="none" stroke="#173462" stroke-width="0.4"/><path d="M2.9000000000000004,4.8 v1.1700000000000002 a1.3,0.65 0 0 0 2.6,0 v-1.1700000000000002 Z" fill="#e6c814" stroke="#6e5e00" stroke-width="0.3"/><ellipse cx="4.2" cy="4.8" rx="1.3" ry="0.7150000000000001" fill="#fbea55" stroke="#6e5e00" stroke-width="0.3"/><path d="M6.3,3 v1.1700000000000002 a1.3,0.65 0 0 0 2.6,0 v-1.1700000000000002 Z" fill="#e6c814" stroke="#6e5e00" stroke-width="0.3"/><ellipse cx="7.6" cy="3" rx="1.3" ry="0.7150000000000001" fill="#fbea55" stroke="#6e5e00" stroke-width="0.3"/><path d="M9.4,4.6 v1.26 a1.4,0.7 0 0 0 2.8,0 v-1.26 Z" fill="#e6c814" stroke="#6e5e00" stroke-width="0.3"/><ellipse cx="10.8" cy="4.6" rx="1.4" ry="0.77" fill="#fbea55" stroke="#6e5e00" stroke-width="0.3"/><path d="M2.0999999999999996,8 v1.1700000000000002 a1.3,0.65 0 0 0 2.6,0 v-1.1700000000000002 Z" fill="#e6c814" stroke="#6e5e00" stroke-width="0.3"/><ellipse cx="3.4" cy="8" rx="1.3" ry="0.7150000000000001" fill="#fbea55" stroke="#6e5e00" stroke-width="0.3"/><path d="M9.1,8 v1.35 a1.5,0.75 0 0 0 3.0,0 v-1.35 Z" fill="#e6c814" stroke="#6e5e00" stroke-width="0.3"/><ellipse cx="10.6" cy="8" rx="1.5" ry="0.8250000000000001" fill="#fbea55" stroke="#6e5e00" stroke-width="0.3"/><path d="M5.5,9.6 v1.35 a1.5,0.75 0 0 0 3.0,0 v-1.35 Z" fill="#e6c814" stroke="#6e5e00" stroke-width="0.3"/><ellipse cx="7" cy="9.6" rx="1.5" ry="0.8250000000000001" fill="#fbea55" stroke="#6e5e00" stroke-width="0.3"/></svg>
<svg class="i" style="left:543px;top:70.8px;" width="14" height="14" viewBox="0 0 14 14"><path d="M0.8,6.4 L4,4 L12.8,4.4 V13 H0.8 Z" fill="url(#gbl)" stroke="#173462" stroke-width="0.5" stroke-linejoin="round"/><path d="M0.8,10 L6,11.2 L12.8,9.6" fill="none" stroke="#173462" stroke-width="0.4"/><path d="M2.0,3.2 v1.26 a1.4,0.7 0 0 0 2.8,0 v-1.26 Z" fill="#e6c814" stroke="#6e5e00" stroke-width="0.3"/><ellipse cx="3.4" cy="3.2" rx="1.4" ry="0.77" fill="#fbea55" stroke="#6e5e00" stroke-width="0.3"/><path d="M5.1,4.4 v1.71 a1.9,0.95 0 0 0 3.8,0 v-1.71 Z" fill="#e6c814" stroke="#6e5e00" stroke-width="0.3"/><ellipse cx="7" cy="4.4" rx="1.9" ry="1.045" fill="#fbea55" stroke="#6e5e00" stroke-width="0.3"/><path d="M8.399999999999999,2.2 v1.9800000000000002 a2.2,1.1 0 0 0 4.4,0 v-1.9800000000000002 Z" fill="#e6c814" stroke="#6e5e00" stroke-width="0.3"/><ellipse cx="10.6" cy="2.2" rx="2.2" ry="1.2100000000000002" fill="#fbea55" stroke="#6e5e00" stroke-width="0.3"/><path d="M7.8,8.4 v1.9800000000000002 a2.2,1.1 0 0 0 4.4,0 v-1.9800000000000002 Z" fill="#e6c814" stroke="#6e5e00" stroke-width="0.3"/><ellipse cx="10" cy="8.4" rx="2.2" ry="1.2100000000000002" fill="#fbea55" stroke="#6e5e00" stroke-width="0.3"/></svg>
<svg class="i" style="left:559.7px;top:71px" width="3" height="14" viewBox="0 0 3 14"><path d="M1.5,0 V14" stroke="#dadada" stroke-width="1" fill="none"/><path d="M2.4,0 V14" stroke="#f8f8f8" stroke-width="0.7" fill="none"/></svg>
<svg class="i" style="left:565.5px;top:70.8px;" width="14" height="14" viewBox="0 0 14 14"><path d="M0.8,6.8 C1,3.4 4,1.2 8.2,1 L13.2,3.2 V8.6 L6.6,13 L0.8,10.8 Z" fill="url(#gbl)" stroke="#173462" stroke-width="0.5" stroke-linejoin="round"/>
<path d="M0.8,7.4 C1,3.6 4,1.4 8.2,1 L13.2,3.2 C9.6,3.6 7.2,5.8 6.6,9.6 Z" fill="url(#grd)" stroke="#8c0b0b" stroke-width="0.4"/>
<path d="M6.6,9.6 V13" stroke="#173462" stroke-width="0.5"/></svg>
<svg class="i" style="left:583.8px;top:70.8px;" width="14" height="14" viewBox="0 0 14 14"><path d="M0.8,8.4 L6.4,1 L9.4,1 L13.2,3.6 V8.8 L6.6,13.2 L0.8,10.8 Z" fill="url(#gbl)" stroke="#173462" stroke-width="0.5" stroke-linejoin="round"/>
<path d="M1,8.4 L6.4,1.2 L11.6,3.4 L6.2,10.2 Z" fill="url(#grd)" stroke="#8c0b0b" stroke-width="0.4"/>
<path d="M6.4,10.2 V13.2" stroke="#173462" stroke-width="0.5"/></svg>
<svg class="i" style="left:602.8px;top:70.8px;" width="14" height="14" viewBox="0 0 14 14"><path d="M7,0.6 L13.2,3.4 L12.2,10.8 L7,13.6 L1.8,10.8 L0.8,3.4 Z" fill="url(#gbl)" stroke="#173462" stroke-width="0.6" stroke-linejoin="round"/>
<path d="M2.4,5.2 L6.2,6.8 V12 L3,10.2 Z" fill="#e81e1e"/><path d="M7.8,6.8 L11.6,5.2 L11,10.2 L7.8,12 Z" fill="#e81e1e"/>
<path d="M0.8,3.4 L7,6 L13.2,3.4 M7,6 V13.6" fill="none" stroke="#173462" stroke-width="0.9"/><path d="M0.8,3.4 L7,0.6 L13.2,3.4 L7,6 Z" fill="#5f8fce" stroke="#173462" stroke-width="0.5"/></svg>
<svg class="i" style="left:621px;top:70.8px;" width="14" height="14" viewBox="0 0 14 14"><path d="M1.6,1.6 L8,0.6 L13.2,2.6 L12.4,11.4 L7,13.6 L0.8,10.4 Z" fill="url(#gbl)" stroke="#173462" stroke-width="0.6" stroke-linejoin="round"/>
<path d="M3.4,3 L11.4,3.6 L10.8,10.4 L6.4,11.6 L3,9.8 Z" fill="url(#grd)" stroke="#8c0b0b" stroke-width="0.3"/>
<path d="M6.2,3.2 L6.2,8.6 L10.8,10.2 M6.2,8.6 L3,9.8" fill="none" stroke="#8c0b0b" stroke-width="0.5"/></svg>
<svg class="i" style="left:637.2px;top:71px" width="3" height="14" viewBox="0 0 3 14"><path d="M1.5,0 V14" stroke="#dadada" stroke-width="1" fill="none"/><path d="M2.4,0 V14" stroke="#f8f8f8" stroke-width="0.7" fill="none"/></svg>
<svg class="i" style="left:643.5px;top:70.8px;" width="14" height="14" viewBox="0 0 14 14"><defs><radialGradient id="gsp2" cx="0.4" cy="0.3"><stop offset="0" stop-color="#6fa0dd"/><stop offset="1" stop-color="#2c5fa8"/></radialGradient></defs>
<circle cx="9.2" cy="5" r="4.4" fill="url(#gsp2)"/><circle cx="5" cy="8.8" r="4.6" fill="url(#gsp2)" stroke="#2b5899" stroke-width="0.3"/></svg>
<svg class="i" style="left:658.8px;top:69px" width="3" height="18" viewBox="0 0 3 18"><path d="M1.5,0 V18" stroke="#d2d2d2" stroke-width="1.2" fill="none"/><path d="M2.4,0 V18" stroke="#f8f8f8" stroke-width="0.7" fill="none"/></svg>
<svg class="i" style="left:662.8px;top:71px" width="2" height="14.5" viewBox="0 0 2 14.5"><path d="M1,0.6 V14.5" stroke="#c9c9c9" stroke-width="0.9" stroke-dasharray="0.9 1.15" fill="none"/></svg>
<svg class="i" style="left:668.6px;top:70.8px;" width="14" height="14" viewBox="0 0 14 14"><path d="M0.8,2.6 L6.6,0.8 L11,2.4 V9.8 L5.4,12 L0.8,9.8 Z" fill="#d6d6d6" stroke="#7c7c7c" stroke-width="0.5" stroke-linejoin="round"/>
<path d="M7.2,3.6 L11,2.4 V9.8 L7.2,11.2 Z" fill="#9c9c9c"/>
<circle cx="4.4" cy="6.4" r="3.1" fill="#5c5c5c"/><path d="M1.2,6 C1.6,2.4 7,2.2 7.8,5.6 C6,6.8 3.2,7 1.2,6 Z" fill="#f6de12" stroke="#8a7a00" stroke-width="0.3"/>
<rect x="8.4" y="4.8" width="1.7" height="3.8" fill="#e0c614" stroke="#7a6c00" stroke-width="0.3"/>
<path d="M6.4,11.4 L12.4,12.6 L13.6,13.6" stroke="#4a4a4a" stroke-width="1.3" fill="none"/><path d="M8.6,11.7 L12.2,12.5" stroke="#f0d418" stroke-width="1.2"/></svg>
<svg class="i" style="left:688px;top:70.8px;" width="14" height="14" viewBox="0 0 14 14"><path d="M0.8,2.6 L6.6,0.8 L11,2.4 V9.8 L5.4,12 L0.8,9.8 Z" fill="#d6d6d6" stroke="#7c7c7c" stroke-width="0.5" stroke-linejoin="round"/>
<path d="M7.2,3.6 L11,2.4 V9.8 L7.2,11.2 Z" fill="#9c9c9c"/>
<circle cx="4.4" cy="6.4" r="3.1" fill="#5c5c5c"/><path d="M1.2,6 C1.6,2.4 7,2.2 7.8,5.6 C6,6.8 3.2,7 1.2,6 Z" fill="#f6de12" stroke="#8a7a00" stroke-width="0.3"/>
<rect x="8.4" y="4.8" width="1.7" height="3.8" fill="#e0c614" stroke="#7a6c00" stroke-width="0.3"/>
<path d="M6.4,11.4 L12.4,12.6 L13.6,13.6" stroke="#4a4a4a" stroke-width="1.3" fill="none"/><path d="M8.6,11.7 L12.2,12.5" stroke="#f0d418" stroke-width="1.2"/><path d="M4.6,2 C7.6,-0.2 12,1.6 12.6,5.6" fill="none" stroke="#27508f" stroke-width="2.1"/><path d="M1,1.4 L3.4,12.4 L13.6,7.4" fill="none" stroke="#cf1515" stroke-width="1.3"/></svg>
<svg class="i" style="left:703.8px;top:71px" width="3" height="14" viewBox="0 0 3 14"><path d="M1.5,0 V14" stroke="#dadada" stroke-width="1" fill="none"/><path d="M2.4,0 V14" stroke="#f8f8f8" stroke-width="0.7" fill="none"/></svg>
<svg class="i" style="left:709.2px;top:70.8px;" width="14" height="14" viewBox="0 0 14 14"><path d="M0.8,2.6 L6.6,0.8 L11,2.4 V9.8 L5.4,12 L0.8,9.8 Z" fill="#d6d6d6" stroke="#7c7c7c" stroke-width="0.5" stroke-linejoin="round"/>
<path d="M7.2,3.6 L11,2.4 V9.8 L7.2,11.2 Z" fill="#9c9c9c"/>
<circle cx="4.4" cy="6.4" r="3.1" fill="#5c5c5c"/><path d="M1.2,6 C1.6,2.4 7,2.2 7.8,5.6 C6,6.8 3.2,7 1.2,6 Z" fill="#f6de12" stroke="#8a7a00" stroke-width="0.3"/>
<rect x="8.4" y="4.8" width="1.7" height="3.8" fill="#e0c614" stroke="#7a6c00" stroke-width="0.3"/>
<path d="M6.4,11.4 L12.4,12.6 L13.6,13.6" stroke="#4a4a4a" stroke-width="1.3" fill="none"/><path d="M8.6,11.7 L12.2,12.5" stroke="#f0d418" stroke-width="1.2"/><circle cx="10.6" cy="4.2" r="2.7" fill="#f2f6fb" stroke="#3f78c4" stroke-width="1.5"/><path d="M12.6,1 v2.4 h-2.4 M8.4,7.4 v-2.2 h2.2" stroke="#3f78c4" stroke-width="0.8" fill="none"/></svg>
<svg class="i" style="left:728px;top:70.8px;" width="14" height="14" viewBox="0 0 14 14"><path d="M0.8,2.6 L6.6,0.8 L11,2.4 V9.8 L5.4,12 L0.8,9.8 Z" fill="#d6d6d6" stroke="#7c7c7c" stroke-width="0.5" stroke-linejoin="round"/>
<path d="M7.2,3.6 L11,2.4 V9.8 L7.2,11.2 Z" fill="#9c9c9c"/>
<circle cx="4.4" cy="6.4" r="3.1" fill="#5c5c5c"/><path d="M1.2,6 C1.6,2.4 7,2.2 7.8,5.6 C6,6.8 3.2,7 1.2,6 Z" fill="#f6de12" stroke="#8a7a00" stroke-width="0.3"/>
<rect x="8.4" y="4.8" width="1.7" height="3.8" fill="#e0c614" stroke="#7a6c00" stroke-width="0.3"/>
<path d="M6.4,11.4 L12.4,12.6 L13.6,13.6" stroke="#4a4a4a" stroke-width="1.3" fill="none"/><path d="M8.6,11.7 L12.2,12.5" stroke="#f0d418" stroke-width="1.2"/><path d="M1.2,8.2 L6.2,13.2 M6.2,8.2 L1.2,13.2" stroke="#cf1515" stroke-width="1.5"/></svg>
<span class="t" style="left:762.8px;top:73.2px;height:10px;line-height:10px;font-size:7.5px;color:#555;transform:scaleX(1.0000);">»</span>
<svg class="i" style="left:1.2px;top:1.8px" width="9.6" height="9.6" viewBox="0 0 16 16">
<path d="M1,0.6 H10.6 V4.2 H5 V6.6 H8.6 V10 H5 V15.4 H1 Z" fill="#c5161d" stroke="#7d0a0f" stroke-width="0.4"/>
<g transform="translate(10.6,10.4)"><circle r="3.6" fill="#3a6fbf" stroke="#1d3f7a" stroke-width="0.5"/>
<g fill="#3a6fbf" stroke="#1d3f7a" stroke-width="0.4"><rect x="-1" y="-5.2" width="2" height="2.2"/><rect x="-1" y="3" width="2" height="2.2"/><rect x="-5.2" y="-1" width="2.2" height="2"/><rect x="3" y="-1" width="2.2" height="2"/>
<rect x="-1" y="-5.2" width="2" height="2.2" transform="rotate(45)"/><rect x="-1" y="-5.2" width="2" height="2.2" transform="rotate(135)"/><rect x="-1" y="-5.2" width="2" height="2.2" transform="rotate(225)"/><rect x="-1" y="-5.2" width="2" height="2.2" transform="rotate(315)"/></g>
<circle r="3.3" fill="#3a6fbf"/><circle r="1.5" fill="#f4f4f4"/></g></svg>
<svg class="i" style="left:170.4px;top:378.2px" width="9.8" height="9.8" viewBox="0 0 16 16">
<path d="M1,0.6 H10.6 V4.2 H5 V6.6 H8.6 V10 H5 V15.4 H1 Z" fill="#c5161d" stroke="#7d0a0f" stroke-width="0.4"/>
<g transform="translate(10.6,10.4)"><circle r="3.6" fill="#3a6fbf" stroke="#1d3f7a" stroke-width="0.5"/>
<g fill="#3a6fbf" stroke="#1d3f7a" stroke-width="0.4"><rect x="-1" y="-5.2" width="2" height="2.2"/><rect x="-1" y="3" width="2" height="2.2"/><rect x="-5.2" y="-1" width="2.2" height="2"/><rect x="3" y="-1" width="2.2" height="2"/>
<rect x="-1" y="-5.2" width="2" height="2.2" transform="rotate(45)"/><rect x="-1" y="-5.2" width="2" height="2.2" transform="rotate(135)"/><rect x="-1" y="-5.2" width="2" height="2.2" transform="rotate(225)"/><rect x="-1" y="-5.2" width="2" height="2.2" transform="rotate(315)"/></g>
<circle r="3.3" fill="#3a6fbf"/><circle r="1.5" fill="#f4f4f4"/></g></svg>
<svg class="i" style="left:240px;top:378.4px" width="9.8" height="9.8" viewBox="0 0 16 16">
<path d="M1,0.6 H10.6 V4.2 H5 V6.6 H8.6 V10 H5 V15.4 H1 Z" fill="#c5161d" stroke="#7d0a0f" stroke-width="0.4"/>
<g transform="translate(10.6,10.4)"><circle r="3.6" fill="#3a6fbf" stroke="#1d3f7a" stroke-width="0.5"/>
<g fill="#3a6fbf" stroke="#1d3f7a" stroke-width="0.4"><rect x="-1" y="-5.2" width="2" height="2.2"/><rect x="-1" y="3" width="2" height="2.2"/><rect x="-5.2" y="-1" width="2.2" height="2"/><rect x="3" y="-1" width="2.2" height="2"/>
<rect x="-1" y="-5.2" width="2" height="2.2" transform="rotate(45)"/><rect x="-1" y="-5.2" width="2" height="2.2" transform="rotate(135)"/><rect x="-1" y="-5.2" width="2" height="2.2" transform="rotate(225)"/><rect x="-1" y="-5.2" width="2" height="2.2" transform="rotate(315)"/></g>
<circle r="3.3" fill="#3a6fbf"/><circle r="1.5" fill="#f4f4f4"/></g></svg>
<svg class="i" style="left:690px;top:0" width="78" height="14" viewBox="0 0 78 14"><path d="M5.2,6.7 h5.4" stroke="#444" stroke-width="0.6"/><path d="M33,5.4 h4.4 v4.4 h-4.4 z M34.2,5.4 v-1.2 h4.4 v4.4 h-1.2" fill="none" stroke="#444" stroke-width="0.6"/><path d="M61,4 l5.6,5.6 M66.6,4 l-5.6,5.6" stroke="#444" stroke-width="0.6"/></svg>
<svg class="i" style="left:138px;top:90px" width="24" height="10" viewBox="0 0 24 10"><path d="M1.4,3.6 h3.4 v3.6 h-3.4 z M2.4,3.6 v-1.4 h3.6 v3.6 h-1.2" fill="none" stroke="#333" stroke-width="0.7"/><path d="M1.4,4.2 h3.4" stroke="#333" stroke-width="0.9"/><path d="M13.6,2.6 l4,4 M17.6,2.6 l-4,4" stroke="#222" stroke-width="1"/></svg>
<svg class="i" style="left:216px;top:379px" width="8" height="8" viewBox="0 0 8 8"><path d="M2.2,2.3 l3.5,3.5 M5.7,2.3 l-3.5,3.5" stroke="#f4f4f4" stroke-width="0.9"/></svg>
<svg class="i" style="left:296.3px;top:379.1px" width="8.4" height="8.4" viewBox="0 0 8.4 8.4"><path d="M2.4,2.4 l3.6,3.6 M6,2.4 l-3.6,3.6" stroke="#ffffff" stroke-width="1.1"/></svg>
<svg class="i" style="left:153px;top:120.8px" width="1" height="1" viewBox="0 0 1 1"><path d="M-1.7,0.85 L0,-0.85 L1.7,0.85" fill="none" stroke="#4a4a4a" stroke-width="0.9"/></svg>
<svg class="i" style="left:153px;top:225.6px" width="1" height="1" viewBox="0 0 1 1"><path d="M-1.7,-0.85 L0,0.85 L1.7,-0.85" fill="none" stroke="#4a4a4a" stroke-width="0.9"/></svg>
<svg class="i" style="left:6.4px;top:235.7px" width="1" height="1" viewBox="0 0 1 1"><path d="M0.85,-1.7 L-0.85,0 L0.85,1.7" fill="none" stroke="#4a4a4a" stroke-width="0.9"/></svg>
<svg class="i" style="left:142.4px;top:235.7px" width="1" height="1" viewBox="0 0 1 1"><path d="M-0.85,-1.7 L0.85,0 L-0.85,1.7" fill="none" stroke="#4a4a4a" stroke-width="0.9"/></svg>
<svg class="i" style="left:32px;top:136px" width="1" height="1" viewBox="0 0 1 1"><path d="M-0.85,-1.7 L0.85,0 L-0.85,1.7" fill="none" stroke="#7a7a7a" stroke-width="1.0"/></svg>
<svg class="i" style="left:32px;top:148px" width="1" height="1" viewBox="0 0 1 1"><path d="M-0.85,-1.7 L0.85,0 L-0.85,1.7" fill="none" stroke="#7a7a7a" stroke-width="1.0"/></svg>
<svg class="i" style="left:32px;top:160px" width="1" height="1" viewBox="0 0 1 1"><path d="M-0.85,-1.7 L0.85,0 L-0.85,1.7" fill="none" stroke="#7a7a7a" stroke-width="1.0"/></svg>
<svg class="i" style="left:32px;top:172px" width="1" height="1" viewBox="0 0 1 1"><path d="M-0.85,-1.7 L0.85,0 L-0.85,1.7" fill="none" stroke="#7a7a7a" stroke-width="1.0"/></svg>
<svg class="i" style="left:32px;top:196px" width="1" height="1" viewBox="0 0 1 1"><path d="M-0.85,-1.7 L0.85,0 L-0.85,1.7" fill="none" stroke="#7a7a7a" stroke-width="1.0"/></svg>
<svg class="i" style="left:39.8px;top:131.3px;" width="9.4" height="9.4" viewBox="0 0 14 14"><path d="M5.6,0.8 V7.6 H13 M5.6,7.6 L1,13" fill="none" stroke="#666666" stroke-width="1.5"/></svg>
<svg class="i" style="left:39.8px;top:143.3px;" width="9.4" height="9.4" viewBox="0 0 14 14"><path d="M1.2,9.6 L7,12 L12.8,9.8 V11.2 L7,13.6 L1.2,11.2 Z" fill="#cfcfcf" stroke="#666666" stroke-width="0.8"/>
<path d="M1.4,3.6 L7.2,1.2 L12.8,3.2 V7.6 L7,10 L1.4,7.8 Z" fill="#8e8e8e" stroke="#666666" stroke-width="0.6"/><path d="M1.4,3.6 L7.2,1.2 L12.8,3.2 L7,5.6 Z" fill="#b4b4b4"/></svg>
<svg class="i" style="left:39.8px;top:155.3px;" width="9.4" height="9.4" viewBox="0 0 14 14"><path d="M0.8,6.6 L8.6,1.8 L13.4,4 V8 L5.6,12.8 L0.8,10.6 Z" fill="#9c9c9c" stroke="#666666" stroke-width="0.5"/><path d="M0.8,6.6 L8.6,1.8 L13.4,4 L5.6,8.8 Z" fill="#bcbcbc"/><path d="M4.6,6.2 L8.4,3.8 L10.6,4.8 L6.8,7.2 Z" fill="#808080"/></svg>
<svg class="i" style="left:39.8px;top:167.3px;" width="9.4" height="9.4" viewBox="0 0 14 14"><path d="M1.2,9.6 L7,12 L12.8,9.8 V11.2 L7,13.6 L1.2,11.2 Z" fill="#cfcfcf" stroke="#666666" stroke-width="0.8"/>
<path d="M1.4,3.6 L7.2,1.2 L12.8,3.2 V7.6 L7,10 L1.4,7.8 Z" fill="#8e8e8e" stroke="#666666" stroke-width="0.6"/><path d="M1.4,3.6 L7.2,1.2 L12.8,3.2 L7,5.6 Z" fill="#b4b4b4"/></svg>
<svg class="i" style="left:39.8px;top:179.3px;" width="9.4" height="9.4" viewBox="0 0 14 14"><path d="M0.8,7 L12.8,1.4 V13 H0.8 Z" fill="#a4a4a4" stroke="#b9b9b9" stroke-width="0.5"/><path d="M2,8 l3,-1.4 M6,6 l3,-1.4 M10,4.4 l2,-1" stroke="#d4d4d4" stroke-width="1.2"/></svg>
<svg class="i" style="left:39.8px;top:191.3px;" width="9.4" height="9.4" viewBox="0 0 14 14"><path d="M1.2,9.6 L7,12 L12.8,9.8 V11.2 L7,13.6 L1.2,11.2 Z" fill="#cfcfcf" stroke="#666666" stroke-width="0.8"/>
<path d="M1.4,3.6 L7.2,1.2 L12.8,3.2 V7.6 L7,10 L1.4,7.8 Z" fill="#8e8e8e" stroke="#666666" stroke-width="0.6"/><path d="M1.4,3.6 L7.2,1.2 L12.8,3.2 L7,5.6 Z" fill="#b4b4b4"/></svg>
<svg class="i" style="left:39.8px;top:203.5px;" width="9.4" height="9.4" viewBox="0 0 14 14"><path d="M0.8,7 L12.8,1.4 V13 H0.8 Z" fill="#3568ad" stroke="#1f457f" stroke-width="0.5"/><circle cx="4" cy="7.4" r="1.4" fill="#f0d21e"/><circle cx="7.6" cy="5.6" r="1.4" fill="#f0d21e"/>
<rect x="7" y="6.6" width="6.4" height="6.8" rx="1" fill="#35c435"/><path d="M10.2,7.6 v4 M8.6,10 l1.6,1.8 l1.6,-1.8" stroke="#fff" stroke-width="1.1" fill="none"/></svg>
<svg class="i" style="left:39.8px;top:215.3px;" width="9.4" height="9.4" viewBox="0 0 14 14"><rect x="1.2" y="5.6" width="7" height="7" fill="#fff" stroke="#d4242a" stroke-width="1.4"/><circle cx="8.6" cy="5.4" r="4.2" fill="none" stroke="#d4242a" stroke-width="1.4"/><circle cx="8.6" cy="5.4" r="1.4" fill="none" stroke="#d4242a" stroke-width="0.8"/></svg>
<svg class="i" style="left:651.6px;top:395.4px" width="9.4" height="9.4" viewBox="0 0 14 14"><path d="M1.6,5.2 C2.4,1.8 7,1.2 10,3.2" fill="none" stroke="#3a3a3a" stroke-width="1.5"/><circle cx="10.6" cy="3.6" r="2.2" fill="#2a2a2a"/><path d="M12.4,8.8 C11.6,12.2 7,12.8 4,10.8" fill="none" stroke="#3a3a3a" stroke-width="1.5"/><circle cx="3.4" cy="10.4" r="2.2" fill="#2a2a2a"/></svg>
<svg class="i" style="left:684.8px;top:398.6px" width="4" height="2.4" viewBox="0 0 4 2.4"><polygon points="0,0 4,0 2,2.4" fill="#000"/></svg>
<svg class="i" style="left:708px;top:88px;will-change:transform" width="60" height="62" viewBox="708 88 60 62">
<g fill="#8f8fb2">
<polygon points="739.5,90.8 744.6,96 734.6,96"/>
<polygon points="739.5,144.4 744.6,139.2 734.6,139.2"/>
<polygon points="712.8,117.4 718,112.4 718,122.4"/>
<polygon points="766.4,117.4 761.2,112.4 761.2,122.4"/>
<path d="M722.6,104.8 C724.4,101 727.6,98.2 731.8,96.6 L733.2,99.8 C730,101 727.6,103 725.8,105.8 L727.6,106.8 L720.6,107.4 L720,100.4 Z"/>
<path d="M756.4,104.8 C754.6,101 751.4,98.2 747.2,96.6 L745.8,99.8 C749,101 751.4,103 753.2,105.8 L751.4,106.8 L758.4,107.4 L759,100.4 Z"/>
</g>
<path d="M731.8,102 L751.6,106.2 Q754.8,107 754.4,110.2 L751.8,127.4 Q751.2,130.6 748,130 L729.2,126.4 Q726,125.6 726.4,122.4 L728.8,104.8 Q729.4,101.6 731.8,102 Z" fill="#d4d4e6" stroke="#a9a9c9" stroke-width="0.8"/>
<path d="M733.2,105 L750.2,108.4 Q751.8,108.8 751.6,110.6 L749.6,125 Q749.2,126.8 747.6,126.6 L731.2,123.4 Q729.8,123 730,121.4 L731.6,106.2 Q731.8,104.8 733.2,105 Z" fill="#c6c6da" stroke="#e4e4f0" stroke-width="0.6"/>
<path d="M729.2,98.4 L749.2,102.4" stroke="#e01010" stroke-width="1.1"/><path d="M758.8,102.4 L759,105.2" stroke="#e03030" stroke-width="1.1"/>
<path d="M729,99 L725,118.6" stroke="#18d018" stroke-width="1.1"/><rect x="724" y="125" width="1.6" height="2.2" fill="#14a014"/>
<path d="M729.6,99 L730,104.4" stroke="#1818d0" stroke-width="1.1"/>
<text x="742.2" y="118.7" transform="translate(742.2 116) skewY(11) translate(-742.2 -116)" text-anchor="middle" font-family="Liberation Sans,sans-serif" font-weight="bold" font-size="7.4" textLength="19.4" lengthAdjust="spacingAndGlyphs" fill="#000" stroke="#000" stroke-width="0.55" style="paint-order:stroke">BOTTOM</text>
<g><path d="M749.4,135.6 L753,134.4 L756.6,135.6 V140.2 L753,141.6 L749.4,140.2 Z" fill="#8a8aa8"/><path d="M749.4,135.6 L753,136.8 L756.6,135.6 L753,134.4 Z" fill="#9c9cb8"/><path d="M753,136.8 V141.6 L756.6,140.2 V135.6 Z" fill="#7c7c9c"/></g>
<polygon points="759.4,136.6 763,136.6 761.2,138.6" fill="#56567c"/>
</svg>
<svg class="i" style="left:748px;top:356px;will-change:transform" width="20" height="20" viewBox="748 356 20 20">
<path d="M754,363 L762.4,363.4" stroke="#c01818" stroke-width="0.9"/><path d="M760.2,362.2 L763.8,363.5 L760.2,364.6 Z" fill="#c01818"/>
<path d="M753.8,363 L753.2,370" stroke="#18a030" stroke-width="0.9"/><path d="M752,368.6 L754.6,368.8 L753,372 Z" fill="#18a030"/>
<circle cx="753.8" cy="362.8" r="0.9" fill="#2828c8"/>
<text x="765" y="364.2" font-family="Liberation Sans,sans-serif" font-size="4.4" font-weight="bold" fill="#2a2a2a">x</text>
<text x="754.6" y="373" font-family="Liberation Sans,sans-serif" font-size="4.4" font-weight="bold" fill="#2a2a2a">y</text>
<text x="754.4" y="361.4" font-family="Liberation Sans,sans-serif" font-size="4.4" font-weight="bold" fill="#2a2a2a">z</text>
</svg>
<span class="t" style="left:12.5px;top:2.6px;height:10px;line-height:10px;font-size:7.6px;color:#000;transform:scaleX(0.8811);">FreeCAD 0.19</span>
<span class="t" style="left:4.7px;top:15.9px;height:10px;line-height:10px;font-size:7.6px;color:#000;transform:scaleX(0.8819);">File</span>
<span class="t" style="left:25.5px;top:15.9px;height:10px;line-height:10px;font-size:7.6px;color:#000;transform:scaleX(0.9163);">Edit</span>
<span class="t" style="left:47.8px;top:15.9px;height:10px;line-height:10px;font-size:7.6px;color:#000;transform:scaleX(0.8999);">View</span>
<span class="t" style="left:72.8px;top:15.9px;height:10px;line-height:10px;font-size:7.6px;color:#000;transform:scaleX(0.8962);">Tools</span>
<span class="t" style="left:99.5px;top:15.9px;height:10px;line-height:10px;font-size:7.6px;color:#000;transform:scaleX(0.9093);">Macro</span>
<span class="t" style="left:129.3px;top:15.9px;height:10px;line-height:10px;font-size:7.6px;color:#000;transform:scaleX(0.8909);">Sketch</span>
<span class="t" style="left:159.7px;top:15.9px;height:10px;line-height:10px;font-size:7.6px;color:#000;transform:scaleX(0.9142);">Part Design</span>
<span class="t" style="left:206.3px;top:15.9px;height:10px;line-height:10px;font-size:7.6px;color:#000;transform:scaleX(0.9030);">Measure</span>
<span class="t" style="left:243px;top:15.9px;height:10px;line-height:10px;font-size:7.6px;color:#000;transform:scaleX(0.9633);">Windows</span>
<span class="t" style="left:282.7px;top:15.9px;height:10px;line-height:10px;font-size:7.6px;color:#000;transform:scaleX(0.9021);">Help</span>
<span class="t" style="left:261px;top:32.4px;height:10px;line-height:10px;font-size:7.6px;color:#000;transform:scaleX(0.8613);">Part Design</span>
<span class="t" style="left:2.8px;top:90.8px;height:10px;line-height:10px;font-size:7.6px;color:#222;transform:scaleX(0.9477);">Combo View</span>
<span class="t" style="left:7.5px;top:103.6px;height:10px;line-height:10px;font-size:7.6px;color:#000;transform:scaleX(0.7971);">Model</span>
<span class="t" style="left:39.5px;top:104.2px;height:10px;line-height:10px;font-size:7.6px;color:#000;transform:scaleX(0.8493);">Tasks</span>
<span class="t" style="left:4.4px;top:118.3px;height:10px;line-height:10px;font-size:7.6px;color:#000;transform:scaleX(0.9515);">Labels &amp; Attributes</span>
<span class="t" style="left:111.2px;top:118.3px;height:10px;line-height:10px;font-size:7.6px;color:#000;transform:scaleX(0.9391);">Description</span>
<span class="t" style="left:52.7px;top:131.9px;height:10px;line-height:10px;font-size:7.6px;color:#828282;transform:scaleX(0.9225);">Origin001</span>
<span class="t" style="left:52.7px;top:143.9px;height:10px;line-height:10px;font-size:7.6px;color:#828282;transform:scaleX(0.9200);">Pad</span>
<span class="t" style="left:52.7px;top:155.9px;height:10px;line-height:10px;font-size:7.6px;color:#828282;transform:scaleX(0.9200);">Pocket</span>
<span class="t" style="left:52.7px;top:167.9px;height:10px;line-height:10px;font-size:7.6px;color:#828282;transform:scaleX(0.9200);">Pad001</span>
<span class="t" style="left:52.7px;top:179.9px;height:10px;line-height:10px;font-size:7.6px;color:#828282;transform:scaleX(0.9200);">LinearPattern</span>
<span class="t" style="left:52.7px;top:191.9px;height:10px;line-height:10px;font-size:7.6px;color:#828282;transform:scaleX(0.9200);">Pad002</span>
<span class="t" style="left:52.7px;top:204.1px;height:10px;line-height:10px;font-size:7.6px;color:#000;transform:scaleX(0.9200);">LinearPattern001</span>
<span class="t" style="left:52.7px;top:215.9px;height:10px;line-height:10px;font-size:7.6px;color:#000;transform:scaleX(0.9200);">Sketch004</span>
<span class="t" style="left:5.6px;top:249.6px;height:10px;line-height:10px;font-size:7.6px;color:#000;transform:scaleX(0.9365);">Property</span>
<span class="t" style="left:65.6px;top:249.6px;height:10px;line-height:10px;font-size:7.6px;color:#000;transform:scaleX(0.8795);">Value</span>
<span class="t" style="left:8.5px;top:377.1px;height:10px;line-height:10px;font-size:7.6px;color:#000;transform:scaleX(0.8264);">View</span>
<span class="t" style="left:36.5px;top:378px;height:10px;line-height:10px;font-size:7.6px;color:#000;transform:scaleX(0.8409);">Data</span>
<span class="t" style="left:3.8px;top:395.7px;height:10px;line-height:10px;font-size:7.6px;color:#000;transform:scaleX(0.9300);">Create a pocket with the selected sketch</span>
<span class="t" style="left:182.8px;top:378.6px;height:10px;line-height:10px;font-size:7.6px;color:#000;transform:scaleX(0.8669);">Start page</span>
<span class="t" style="left:251.9px;top:378.6px;height:10px;line-height:10px;font-size:7.6px;color:#000;transform:scaleX(0.8844);">Unnamed : 1*</span>
<span class="t" style="left:361.8px;top:90.4px;height:10px;line-height:10px;font-size:7.6px;color:#505050;transform:scaleX(0.9300);">Create a pocket with the selected sketch</span>
<span class="t" style="left:662.5px;top:395.6px;height:10px;line-height:10px;font-size:7.6px;color:#000;width:22.8px;overflow:hidden;transform:scaleX(0.915)">Gesture</span>
<span class="t" style="left:696.7px;top:395.6px;height:10px;line-height:10px;font-size:7.6px;color:#000;transform:scaleX(0.8681);">140.77 mm x 67.03 mm</span>
</body>
</html>
